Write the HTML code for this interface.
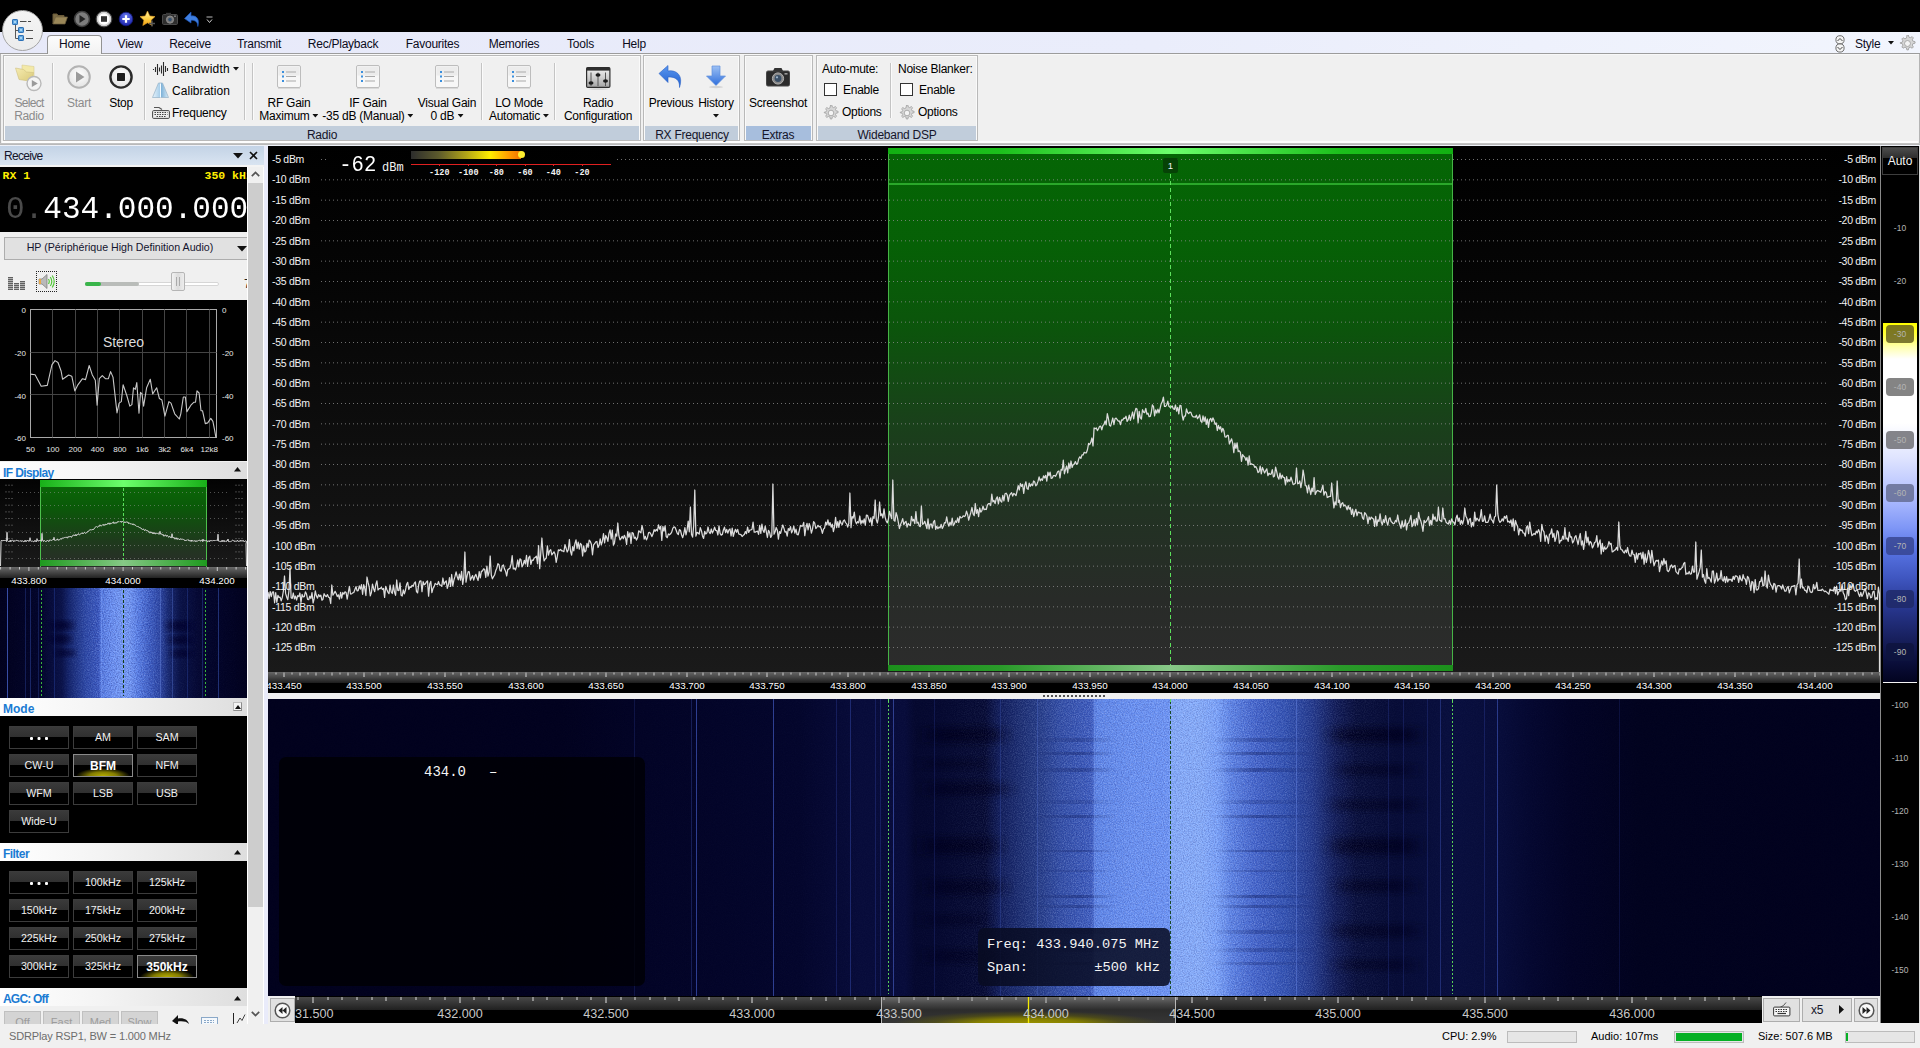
<!DOCTYPE html><html><head><meta charset="utf-8"><title>SDR Console</title><style>
*{box-sizing:border-box;margin:0;padding:0}
html,body{width:1920px;height:1048px;overflow:hidden;background:#000;}
body{position:relative;font-family:"Liberation Sans",sans-serif;font-size:12px;color:#000;}
.a{position:absolute;}
.t{position:absolute;white-space:nowrap;line-height:1;}
.c{transform:translateX(-50%);}
.r{transform:translateX(-100%);}
.mono{font-family:"Liberation Mono",monospace;}
.rb{font-size:12px;color:#000;letter-spacing:-.250px;}
.btn{position:absolute;width:60px;height:23px;border:1px solid #3c3c3c;background:linear-gradient(#3a3a3a 0,#303030 10px,#000 10px,#000 100%);color:#f0f0f0;font-size:10.700px;text-align:center;line-height:20px;}
.btn.sel{border-color:#8a8a8a;font-weight:bold;color:#fff;font-size:12px;line-height:23px;}
.btn.sel:after{content:"";position:absolute;left:2px;right:2px;bottom:0;height:9px;background:radial-gradient(ellipse 27px 8px at 50% 100%,#b4ac00 0,#837c00 50%,rgba(60,58,0,0) 100%);z-index:0}
.btn span{position:relative;z-index:1}
.ph{position:absolute;left:0;width:247px;background:linear-gradient(90deg,#fff 0,#f4f4f4 40%,#dedede 100%);color:#1b7bd3;font-weight:bold;font-size:12px;}
.ph b{position:absolute;left:3px;top:4px;line-height:14px}
.sb{position:absolute;background:#e1e1e1;border:1px solid #adadad;}
</style></head><body>
<div class="a" style="left:0px;top:32px;width:1920px;height:22px;background:linear-gradient(90deg,#e7e9f9 0,#eaedfb 60%,#f2f5fd 100%);"></div>
<div class="a" style="left:0px;top:53px;width:1920px;height:93px;background:#f0f0f0;border-top:1px solid #9c9c9c;"></div>
<div class="a" style="left:0px;top:54px;width:1920px;height:1px;background:#f8f8f8;"></div>
<div class="a" style="left:0px;top:54px;width:1px;height:92px;background:#b4b4b4;"></div>
<div class="a" style="left:1919px;top:54px;width:1px;height:92px;background:#b4b4b4;"></div>
<div class="a" style="left:0px;top:143px;width:1920px;height:2px;background:linear-gradient(#c8c8c8,#b4b4b4);"></div>
<div class="a" style="left:0px;top:145px;width:1920px;height:1px;background:#eef1f8;"></div>
<div class="a" style="left:2px;top:141px;width:1916px;height:2px;background:#fdfdfd;"></div>
<div class="a" style="left:47px;top:35px;width:55px;height:19px;background:linear-gradient(#fcfcfc,#f2f2f2);border:1px solid #929292;border-bottom:none;border-radius:4px 4px 0 0;"></div>
<div class="a" style="left:48px;top:54px;width:53px;height:1px;background:#f4f4f4;"></div>
<div class="t c rb" style="left:74.5px;top:38px;color:#0c0c1c;">Home</div>
<div class="t c rb" style="left:130px;top:38px;color:#0c0c1c;">View</div>
<div class="t c rb" style="left:190px;top:38px;color:#0c0c1c;">Receive</div>
<div class="t c rb" style="left:259px;top:38px;color:#0c0c1c;">Transmit</div>
<div class="t c rb" style="left:343px;top:38px;color:#0c0c1c;">Rec/Playback</div>
<div class="t c rb" style="left:432.5px;top:38px;color:#0c0c1c;">Favourites</div>
<div class="t c rb" style="left:514px;top:38px;color:#0c0c1c;">Memories</div>
<div class="t c rb" style="left:580.5px;top:38px;color:#0c0c1c;">Tools</div>
<div class="t c rb" style="left:634px;top:38px;color:#0c0c1c;">Help</div>
<div class="a" style="left:2px;top:10px;width:41px;height:41px;border-radius:50%;background:linear-gradient(#f4f4f4,#ececec);border:1px solid #a4a4a4;"></div>
<svg class="a" style="left:10px;top:17px;" width="26" height="26" viewBox="0 0 26 26">
<g fill="#62a8e0" stroke="#2a6eb4" stroke-width="1"><rect x="2.500" y="2.500" width="5" height="5" rx=".6"/><rect x="8.500" y="10.500" width="5" height="5" rx=".6"/><rect x="8.500" y="18.500" width="5" height="5" rx=".6"/></g>
<g fill="#a8d4f4"><rect x="4" y="4" width="2" height="2"/><rect x="10" y="12" width="2" height="2"/><rect x="10" y="20" width="2" height="2"/></g>
<path d="M5.500 8V21.500H8M5.500 13.500H8" stroke="#585858" fill="none" stroke-width="1"/>
<path d="M10 4.500h6.500M18 4.500h3M16 13.500h7M16 21.500h7" stroke="#4a4a4a" stroke-width="1"/></svg>
<svg class="a" style="left:52px;top:12px;" width="16" height="13" viewBox="0 0 16 13"><path d="M1 12V2h4l1 1.5h6V5" fill="#7b6b45" stroke="#6a5a38"/><path d="M1 12l2.5-7h12L13 12z" fill="#9a8758" stroke="#6f6040" stroke-width=".7"/></svg>
<svg class="a" style="left:73px;top:10px;" width="18" height="18" viewBox="0 0 18 18"><circle cx="9" cy="9" r="7.5" fill="#7d7d7d" stroke="#3d3d3d" stroke-width="1.6"/><path d="M6.5 5l6 4-6 4z" fill="#222"/></svg>
<svg class="a" style="left:95px;top:10px;" width="18" height="18" viewBox="0 0 18 18"><circle cx="9" cy="9" r="6.6" fill="#fff" stroke="#d0d0d0" stroke-width="1.8"/><circle cx="9" cy="9" r="7.9" fill="none" stroke="#555" stroke-width=".8"/><rect x="6" y="6.2" width="6" height="5.6" fill="#333"/></svg>
<svg class="a" style="left:118px;top:11px;" width="16" height="16" viewBox="0 0 16 16"><defs><radialGradient id="gp" cx=".5" cy=".3" r=".7"><stop offset="0" stop-color="#6a7cf0"/><stop offset="1" stop-color="#1a22a8"/></radialGradient></defs><circle cx="8" cy="8" r="6.8" fill="url(#gp)" stroke="#141a80" stroke-width=".8"/><path d="M8 4.3v7.4M4.3 8h7.4" stroke="#fff" stroke-width="2.2"/></svg>
<svg class="a" style="left:139px;top:10px;" width="19" height="18" viewBox="0 0 19 18"><defs><linearGradient id="gs" x1="0" y1="0" x2="0" y2="1"><stop offset="0" stop-color="#fff6b0"/><stop offset=".5" stop-color="#ffd24a"/><stop offset="1" stop-color="#f0a010"/></linearGradient></defs><path d="M8.5 1l2.3 5 5.2.6-3.9 3.6 1.1 5.3-4.7-2.7-4.7 2.7 1.1-5.3L1 6.6l5.2-.6z" fill="url(#gs)" stroke="#e8a020" stroke-width=".6"/><path d="M13 10.5v6M10 13.5h6" stroke="#555" stroke-width="1.4"/></svg>
<svg class="a" style="left:162px;top:12px;" width="16" height="13" viewBox="0 0 16 13"><rect x=".5" y="2.5" width="15" height="10" rx="1.2" fill="#2e2e2e" stroke="#4a4a4a"/><rect x="4" y=".8" width="5" height="2.4" fill="#3a3a3a"/><circle cx="8" cy="7.6" r="3.6" fill="#777" stroke="#999" stroke-width=".8"/><circle cx="8" cy="7.6" r="1.8" fill="#35506e"/><rect x="12" y="3.6" width="2" height="1.2" fill="#888"/></svg>
<svg class="a" style="left:183px;top:10px;" width="18" height="17" viewBox="0 0 18 17"><path d="M1.5 8.5L8 2v4c5.5-1 9 3.500 6.800 10.500 0-4.500-2.500-6.500-6.800-6.200V13z" fill="#3f7fe0" stroke="#1d55b8" stroke-width=".7"/></svg>
<svg class="a" style="left:206px;top:16px;" width="8" height="8" viewBox="0 0 8 8"><path d="M.5 1h6" stroke="#bbb"/><path d="M1 3.500l2.500 3 2.500-3" stroke="#ccc" fill="none"/></svg>
<svg class="a" style="left:1833px;top:35px;" width="14" height="18" viewBox="0 0 14 18"><circle cx="7" cy="4.800" r="4.100" fill="#f4f4f4" stroke="#6e6e6e" stroke-width="1"/><circle cx="7" cy="13" r="4.100" fill="#f4f4f4" stroke="#6e6e6e" stroke-width="1"/><path d="M4.500 6l2.500-2.500 2.500 2.500M4.500 12l2.500 2.500 2.500-2.500" stroke="#444" fill="none" stroke-width="1"/></svg>
<div class="t rb" style="left:1855px;top:38px;color:#0c0c1c;">Style</div>
<svg class="a" style="left:1888px;top:41px;" width="6" height="4" viewBox="0 0 6 4"><path d="M0 0h6l-3 3.500z" fill="#111"/></svg>
<svg class="a" style="left:1899px;top:35px;" width="17" height="17" viewBox="0 0 16 16"><path d="M7.500 0l1.300 0 .5 2 1.300.6 1.800-1 1.100 1.100-1 1.800.6 1.300 2 .5v1.400l-2 .5-.6 1.300 1 1.800-1.100 1.100-1.800-1-1.300.6-.5 2h-1.400l-.5-2-1.300-.6-1.800 1-1.100-1.100 1-1.800-.6-1.300-2-.5V7.300l2-.5.6-1.300-1-1.800 1.100-1.100 1.800 1 1.300-.6.5-2z" fill="#d6d6d6" stroke="#a6a6a6" stroke-width=".9"/><circle cx="8" cy="8" r="2.800" fill="#f4f4f4" stroke="#a6a6a6" stroke-width=".9"/></svg>
<div class="a" style="left:3px;top:55px;width:638px;height:86px;border:1px solid #b9b9b9;background:#f0f0f0;"></div>
<div class="a" style="left:4px;top:56px;width:636px;height:84px;border:1px solid #fafafa;border-bottom:none;"></div>
<div class="a" style="left:5px;top:126px;width:634px;height:14px;background:#c1cddb;"></div>
<div class="t c rb" style="left:322px;top:129px;color:#15152a;">Radio</div>
<div class="a" style="left:643px;top:55px;width:97px;height:86px;border:1px solid #b9b9b9;background:#f0f0f0;"></div>
<div class="a" style="left:644px;top:56px;width:95px;height:84px;border:1px solid #fafafa;border-bottom:none;"></div>
<div class="a" style="left:645px;top:126px;width:93px;height:14px;background:#c1cddb;"></div>
<div class="t c rb" style="left:692px;top:129px;color:#15152a;">RX Frequency</div>
<div class="a" style="left:744px;top:55px;width:69px;height:86px;border:1px solid #b9b9b9;background:#f0f0f0;"></div>
<div class="a" style="left:745px;top:56px;width:67px;height:84px;border:1px solid #fafafa;border-bottom:none;"></div>
<div class="a" style="left:746px;top:126px;width:65px;height:14px;background:#a7bedd;"></div>
<div class="t c rb" style="left:778px;top:129px;color:#15152a;">Extras</div>
<div class="a" style="left:816px;top:55px;width:162px;height:86px;border:1px solid #b9b9b9;background:#f0f0f0;"></div>
<div class="a" style="left:817px;top:56px;width:160px;height:84px;border:1px solid #fafafa;border-bottom:none;"></div>
<div class="a" style="left:818px;top:126px;width:158px;height:14px;background:#c1cddb;"></div>
<div class="t c rb" style="left:897px;top:129px;color:#15152a;">Wideband DSP</div>
<div class="a" style="left:52px;top:63px;width:1px;height:57px;background:#c4c4c4;"></div>
<div class="a" style="left:53px;top:63px;width:1px;height:57px;background:#fbfbfb;"></div>
<div class="a" style="left:144px;top:63px;width:1px;height:57px;background:#c4c4c4;"></div>
<div class="a" style="left:145px;top:63px;width:1px;height:57px;background:#fbfbfb;"></div>
<div class="a" style="left:244px;top:63px;width:1px;height:57px;background:#c4c4c4;"></div>
<div class="a" style="left:245px;top:63px;width:1px;height:57px;background:#fbfbfb;"></div>
<div class="a" style="left:252px;top:63px;width:1px;height:57px;background:#c4c4c4;"></div>
<div class="a" style="left:253px;top:63px;width:1px;height:57px;background:#fbfbfb;"></div>
<div class="a" style="left:481px;top:63px;width:1px;height:57px;background:#c4c4c4;"></div>
<div class="a" style="left:482px;top:63px;width:1px;height:57px;background:#fbfbfb;"></div>
<div class="a" style="left:554px;top:63px;width:1px;height:57px;background:#c4c4c4;"></div>
<div class="a" style="left:555px;top:63px;width:1px;height:57px;background:#fbfbfb;"></div>
<div class="a" style="left:890px;top:63px;width:1px;height:55px;background:#c4c4c4;"></div>
<div class="a" style="left:891px;top:63px;width:1px;height:55px;background:#fbfbfb;"></div>
<svg class="a" style="left:14px;top:62px;" width="30" height="30" viewBox="0 0 30 30"><defs><linearGradient id="gf" x1="0" y1="0" x2="1" y2="1"><stop offset="0" stop-color="#f6ecb0"/><stop offset="1" stop-color="#d9c878"/></linearGradient></defs>
<path d="M8 3l12 1.500v13H8z" fill="#f3e9a8" stroke="#d8cc90" stroke-width=".6"/>
<path d="M1.500 6l8 1.500 3 2.500 7 .5-1.500 9-13-2z" fill="url(#gf)" stroke="#cfc080" stroke-width=".6"/>
<circle cx="20" cy="21.500" r="7" fill="#f4f4f4" stroke="#b9b9b9" stroke-width="1.400"/><path d="M17.800 18l6 3.500-6 3.500z" fill="#9a9a9a"/></svg>
<div class="t c rb" style="left:29px;top:97px;color:#8b8b8b;letter-spacing:-.700px;">Select</div>
<div class="t c rb" style="left:29px;top:110px;color:#8b8b8b;letter-spacing:-.400px;">Radio</div>
<svg class="a" style="left:66px;top:64px;" width="26" height="26" viewBox="0 0 26 26"><defs><radialGradient id="gst" cx=".5" cy=".4" r=".6"><stop offset="0" stop-color="#ffffff"/><stop offset="1" stop-color="#e3e3e3"/></radialGradient></defs><circle cx="13" cy="13" r="10.800" fill="url(#gst)" stroke="#b3b3b3" stroke-width="2"/><path d="M10 7.500l8.500 5.500-8.500 5.500z" fill="#9b9b9b"/></svg>
<div class="t c rb" style="left:79px;top:97px;color:#8b8b8b;">Start</div>
<svg class="a" style="left:108px;top:64px;" width="26" height="26" viewBox="0 0 26 26"><circle cx="13" cy="13" r="10.600" fill="url(#gst)" stroke="#2a2a2a" stroke-width="2.400"/><rect x="9" y="9" width="8" height="8" rx=".8" fill="#1d1d1d"/></svg>
<div class="t c rb" style="left:121px;top:97px;">Stop</div>
<svg class="a" style="left:152px;top:61px;" width="18" height="16" viewBox="0 0 18 16"><path d="M1.500 8v1M3.500 6v5M5.500 3v11M7.500 6.500v4M9.500 4.500v8M11.500 1v14M13.500 5v6M15.500 7v3" stroke="#2c2c2c" stroke-width="1.100"/></svg>
<div class="t rb" style="left:172px;top:63px;letter-spacing:.200px;">Bandwidth</div>
<svg class="a" style="left:233px;top:67px;" width="6" height="4" viewBox="0 0 6 4"><path d="M0 0h6l-3 3.500z" fill="#111"/></svg>
<svg class="a" style="left:152px;top:82px;" width="18" height="17" viewBox="0 0 18 17"><defs><linearGradient id="gc" x1="0" y1="0" x2="1" y2="0"><stop offset="0" stop-color="#e8f4fc"/><stop offset=".45" stop-color="#a9cfea"/><stop offset=".55" stop-color="#7fb2d8"/><stop offset="1" stop-color="#d8ecf8"/></linearGradient></defs><path d="M6.500 1h4l6 14.500h-16z" fill="url(#gc)" stroke="#9db8cc" stroke-width=".8"/><path d="M8.500 1.500v14" stroke="#f4fbff" stroke-width="1"/></svg>
<div class="t rb" style="left:172px;top:85px;letter-spacing:.050px;">Calibration</div>
<svg class="a" style="left:152px;top:106px;" width="18" height="13" viewBox="0 0 18 13"><path d="M2 1.500h5l3 2" stroke="#555" fill="none" stroke-width="1.200"/><rect x=".6" y="4.600" width="16.800" height="7.800" rx="1" fill="#eee" stroke="#444" stroke-width="1"/><path d="M2.500 6.500h13M2.500 8.500h13M4.500 10.500h9" stroke="#444" stroke-width="1" stroke-dasharray="1.500 1"/></svg>
<div class="t rb" style="left:172px;top:107px;">Frequency</div>
<svg class="a" style="left:277px;top:65px;" width="24" height="24" viewBox="0 0 24 24"><rect x=".5" y=".5" width="23" height="22" rx="1.500" fill="#f7f7f7" stroke="#bdbdbd"/><rect x="1.500" y="1.500" width="21" height="9" fill="#ececec"/>
<path d="M9 7h10M9 11.500h10M9 16h10" stroke="#a9a9a9" stroke-width="1.200"/><g fill="#3a8fdd"><rect x="5" y="6" width="2" height="2"/><rect x="5" y="10.500" width="2" height="2"/><rect x="5" y="15" width="2" height="2"/></g><path d="M1 23.500h22" stroke="#d9d9d9"/></svg>
<div class="t c rb" style="left:289px;top:97px;">RF Gain</div>
<div class="t c rb" style="left:289px;top:110px;">Maximum <svg width="6" height="4" viewBox="0 0 6 4" style="vertical-align:2px"><path d="M0 0h6l-3 3.500z" fill="#111"/></svg></div>
<svg class="a" style="left:356px;top:65px;" width="24" height="24" viewBox="0 0 24 24"><rect x=".5" y=".5" width="23" height="22" rx="1.500" fill="#f7f7f7" stroke="#bdbdbd"/><rect x="1.500" y="1.500" width="21" height="9" fill="#ececec"/>
<path d="M9 7h10M9 11.500h10M9 16h10" stroke="#a9a9a9" stroke-width="1.200"/><g fill="#3a8fdd"><rect x="5" y="6" width="2" height="2"/><rect x="5" y="10.500" width="2" height="2"/><rect x="5" y="15" width="2" height="2"/></g><path d="M1 23.500h22" stroke="#d9d9d9"/></svg>
<div class="t c rb" style="left:368px;top:97px;">IF Gain</div>
<div class="t c rb" style="left:368px;top:110px;">-35 dB (Manual) <svg width="6" height="4" viewBox="0 0 6 4" style="vertical-align:2px"><path d="M0 0h6l-3 3.500z" fill="#111"/></svg></div>
<svg class="a" style="left:435px;top:65px;" width="24" height="24" viewBox="0 0 24 24"><rect x=".5" y=".5" width="23" height="22" rx="1.500" fill="#f7f7f7" stroke="#bdbdbd"/><rect x="1.500" y="1.500" width="21" height="9" fill="#ececec"/>
<path d="M9 7h10M9 11.500h10M9 16h10" stroke="#a9a9a9" stroke-width="1.200"/><g fill="#3a8fdd"><rect x="5" y="6" width="2" height="2"/><rect x="5" y="10.500" width="2" height="2"/><rect x="5" y="15" width="2" height="2"/></g><path d="M1 23.500h22" stroke="#d9d9d9"/></svg>
<div class="t c rb" style="left:447px;top:97px;">Visual Gain</div>
<div class="t c rb" style="left:447px;top:110px;">0 dB <svg width="6" height="4" viewBox="0 0 6 4" style="vertical-align:2px"><path d="M0 0h6l-3 3.500z" fill="#111"/></svg></div>
<svg class="a" style="left:507px;top:65px;" width="24" height="24" viewBox="0 0 24 24"><rect x=".5" y=".5" width="23" height="22" rx="1.500" fill="#f7f7f7" stroke="#bdbdbd"/><rect x="1.500" y="1.500" width="21" height="9" fill="#ececec"/>
<path d="M9 7h10M9 11.500h10M9 16h10" stroke="#a9a9a9" stroke-width="1.200"/><g fill="#3a8fdd"><rect x="5" y="6" width="2" height="2"/><rect x="5" y="10.500" width="2" height="2"/><rect x="5" y="15" width="2" height="2"/></g><path d="M1 23.500h22" stroke="#d9d9d9"/></svg>
<div class="t c rb" style="left:519px;top:97px;">LO Mode</div>
<div class="t c rb" style="left:519px;top:110px;">Automatic <svg width="6" height="4" viewBox="0 0 6 4" style="vertical-align:2px"><path d="M0 0h6l-3 3.500z" fill="#111"/></svg></div>
<svg class="a" style="left:586px;top:67px;" width="25" height="23" viewBox="0 0 25 23"><defs><linearGradient id="grc" x1="0" y1="0" x2="0" y2="1"><stop offset="0" stop-color="#f2f2f2"/><stop offset=".5" stop-color="#cfcfcf"/><stop offset="1" stop-color="#a4a4a4"/></linearGradient></defs>
<rect x=".6" y=".6" width="23.300" height="19.800" rx="1.200" fill="url(#grc)" stroke="#2e2e2e" stroke-width="1.200"/><rect x=".6" y=".6" width="23.300" height="3" fill="#2e2e2e"/>
<path d="M5 5.500v13.500M12 5.500v13.500M19.500 5.500v13.500" stroke="#555" stroke-width="1"/>
<ellipse cx="5" cy="16" rx="2.500" ry="1.700" fill="#1c1c1c"/><ellipse cx="12" cy="8" rx="2.500" ry="1.700" fill="#1c1c1c"/><ellipse cx="19.500" cy="14" rx="2.500" ry="1.700" fill="#1c1c1c"/>
<ellipse cx="12.500" cy="22" rx="10" ry=".8" fill="#d2d2d2"/></svg>
<div class="t c rb" style="left:598px;top:97px;">Radio</div>
<div class="t c rb" style="left:598px;top:110px;">Configuration</div>
<svg class="a" style="left:657px;top:64px;" width="28" height="26" viewBox="0 0 28 26"><defs><linearGradient id="gu" x1="0" y1="0" x2="0" y2="1"><stop offset="0" stop-color="#5b97ee"/><stop offset="1" stop-color="#1f5fd0"/></linearGradient></defs><path d="M2 9.500L11 1.500v5.500c9-1.500 15.500 5 11.500 16.500.5-7.500-4-11-11.500-10.500V18.500z" fill="url(#gu)" stroke="#2a62c6" stroke-width=".6"/></svg>
<div class="t c rb" style="left:671px;top:97px;">Previous</div>
<svg class="a" style="left:705px;top:65px;" width="22" height="24" viewBox="0 0 22 24"><defs><linearGradient id="gh" x1="0" y1="0" x2="0" y2="1"><stop offset="0" stop-color="#9cc0f4"/><stop offset="1" stop-color="#2f6fdc"/></linearGradient></defs><path d="M7 1h8v10h5.500L11 20.500 1.500 11H7z" fill="url(#gh)" stroke="#5e8fdc" stroke-width=".7"/><ellipse cx="11" cy="22" rx="7" ry="1.200" fill="#d4d4d4"/></svg>
<div class="t c rb" style="left:716px;top:97px;">History</div>
<svg class="a" style="left:713px;top:114px;" width="6" height="4" viewBox="0 0 6 4"><path d="M0 0h6l-3 3.500z" fill="#111"/></svg>
<svg class="a" style="left:766px;top:67px;" width="24" height="20" viewBox="0 0 24 20"><rect x=".5" y="4" width="23" height="15" rx="1.500" fill="#2b2b2b" stroke="#474747"/><path d="M7 4l1.500-3h7L17 4z" fill="#333"/><circle cx="12" cy="11.500" r="5.600" fill="#888" stroke="#b0b0b0" stroke-width="1"/><circle cx="12" cy="11.500" r="3.400" fill="#3a4f66"/><circle cx="11" cy="10.300" r="1.100" fill="#9fb6cc"/><rect x="18.500" y="6" width="3" height="1.600" fill="#999"/></svg>
<div class="t c rb" style="left:778px;top:97px;">Screenshot</div>
<div class="t rb" style="left:822px;top:63px;">Auto-mute:</div>
<div class="a" style="left:824px;top:83px;width:13px;height:13px;background:#fff;border:1px solid #333;"></div>
<div class="t rb" style="left:843px;top:84px;">Enable</div>
<svg class="a" style="left:823px;top:105px;" width="16" height="16" viewBox="0 0 16 16"><path d="M7.500 0l1.300 0 .5 2 1.300.6 1.800-1 1.100 1.100-1 1.800.6 1.300 2 .5v1.400l-2 .5-.6 1.300 1 1.800-1.100 1.100-1.800-1-1.300.6-.5 2h-1.400l-.5-2-1.300-.6-1.800 1-1.100-1.100 1-1.800-.6-1.300-2-.5V7.300l2-.5.6-1.300-1-1.800 1.100-1.100 1.800 1 1.300-.6.5-2z" fill="#d6d6d6" stroke="#a6a6a6" stroke-width=".9"/><circle cx="8" cy="8" r="2.800" fill="#f4f4f4" stroke="#a6a6a6" stroke-width=".9"/></svg>
<div class="t rb" style="left:842px;top:106px;">Options</div>
<div class="t rb" style="left:898px;top:63px;">Noise Blanker:</div>
<div class="a" style="left:900px;top:83px;width:13px;height:13px;background:#fff;border:1px solid #333;"></div>
<div class="t rb" style="left:919px;top:84px;">Enable</div>
<svg class="a" style="left:899px;top:105px;" width="16" height="16" viewBox="0 0 16 16"><path d="M7.500 0l1.300 0 .5 2 1.300.6 1.800-1 1.100 1.100-1 1.800.6 1.300 2 .5v1.400l-2 .5-.6 1.300 1 1.800-1.100 1.100-1.800-1-1.300.6-.5 2h-1.400l-.5-2-1.300-.6-1.800 1-1.100-1.100 1-1.800-.6-1.300-2-.5V7.300l2-.5.6-1.300-1-1.800 1.100-1.100 1.800 1 1.300-.6.5-2z" fill="#d6d6d6" stroke="#a6a6a6" stroke-width=".9"/><circle cx="8" cy="8" r="2.800" fill="#f4f4f4" stroke="#a6a6a6" stroke-width=".9"/></svg>
<div class="t rb" style="left:918px;top:106px;">Options</div>
<div class="a" style="left:0px;top:146px;width:268px;height:878px;background:#f0f0f0;"></div>
<div class="a" style="left:0px;top:146px;width:264px;height:19px;background:linear-gradient(#c3d3e6,#d9e4f1);"></div>
<div class="t rb" style="left:4px;top:150px;color:#15152a;letter-spacing:-.700px;">Receive</div>
<svg class="a" style="left:233px;top:153px;" width="10" height="6" viewBox="0 0 10 6"><path d="M0 0h10l-5 5.500z" fill="#111"/></svg>
<svg class="a" style="left:249px;top:151px;" width="9" height="9" viewBox="0 0 9 9"><path d="M1 1l7 7M8 1l-7 7" stroke="#111" stroke-width="1.600"/></svg>
<div class="a" style="left:0px;top:165px;width:264px;height:2px;background:#f4f4f4;"></div>
<div class="a" style="left:264px;top:146px;width:4px;height:878px;background:#e9ebfa;"></div>
<div class="a" style="left:247px;top:167px;width:1px;height:857px;background:#fff;"></div>
<div class="a" style="left:248px;top:167px;width:15px;height:857px;background:#f0f0f0;"></div>
<div class="a" style="left:248px;top:183px;width:15px;height:724px;background:#cdcdcd;"></div>
<svg class="a" style="left:251px;top:171px;" width="9" height="6" viewBox="0 0 9 6"><path d="M.8 5.200l3.700-3.700 3.700 3.700" stroke="#555" stroke-width="1.700" fill="none"/></svg>
<svg class="a" style="left:251px;top:1011px;" width="9" height="6" viewBox="0 0 9 6"><path d="M.8 .8l3.700 3.700 3.700-3.700" stroke="#555" stroke-width="1.700" fill="none"/></svg>
<div class="a" style="left:263px;top:167px;width:1px;height:857px;background:#fff;"></div>
<div class="a" style="left:0px;top:167px;width:247px;height:65px;background:#000;overflow:hidden;"><div class="t mono" style="left:2.500px;top:2.500px;font-size:11.500px;font-weight:bold;color:#ffee00;">RX 1</div><div class="t mono" style="left:204.500px;top:2.500px;font-size:11.500px;font-weight:bold;color:#ffee00;">350 kHz</div><div class="t mono" id="bigf" style="left:6px;top:26.500px;font-size:31.050px;color:#fff;transform-origin:0 50%;transform:scaleY(1.030);"><span style="color:#4a4a4a">0.</span>434.000.000</div></div>
<div class="a" style="left:4px;top:237px;width:250px;height:23px;background:#e1e1e1;border:1px solid #adadad;"></div>
<div class="a" style="left:247px;top:237px;width:8px;height:23px;background:#fff;"></div>
<div class="a" style="left:248px;top:237px;width:15px;height:23px;background:#cdcdcd;"></div>
<div class="t " style="left:119.5px;top:242px;font-size:11.500px;color:#14142e;transform:translateX(-50%) scaleX(.925);">HP (P&eacute;riph&eacute;rique High Definition Audio)</div>
<svg class="a" style="left:237px;top:246px;" width="10" height="6" viewBox="0 0 10 6"><path d="M0 0h10l-5 5.500z" fill="#111"/></svg>
<svg class="a" style="left:8px;top:276px;" width="17" height="14" viewBox="0 0 17 14"><g stroke="#606060" stroke-width="1" shape-rendering="crispEdges"><path d="M0 1.500h5M0 3.500h5M0 5.500h5M0 7.500h5M0 9.500h5M0 11.500h5M0 13.500h5"/><path d="M6 7.500h5M6 9.500h5M6 11.500h5M6 13.500h5"/><path d="M12 5.500h5M12 7.500h5M12 9.500h5M12 11.500h5M12 13.500h5"/></g><g stroke="#b0b0b0" stroke-width="1" shape-rendering="crispEdges"><path d="M0 2.500h5M0 4.500h5M0 6.500h5M0 8.500h5M0 10.500h5M0 12.500h5M6 8.500h5M6 10.500h5M6 12.500h5M12 6.500h5M12 8.500h5M12 10.500h5M12 12.500h5"/></g></svg>
<div class="a" style="left:36px;top:271px;width:21px;height:21px;border:1px dotted #222;"></div>
<svg class="a" style="left:38px;top:274px;" width="17" height="15" viewBox="0 0 17 15"><path d="M1 5h3l5-4.500v14L4 10H1z" fill="#b9b9b9" stroke="#777" stroke-width=".7"/><path d="M1 5h2v5H1z" fill="#e8a848"/><path d="M10.500 5q1.500 2.500 0 5M12.300 3q3 4.500 0 9M14.200 1.500q4 6 0 12" stroke="#55c83c" fill="none" stroke-width="1.200"/></svg>
<div class="a" style="left:85px;top:282px;width:134px;height:4px;background:#fff;border:1px solid #d6d6d6;border-radius:2px;"></div>
<div class="a" style="left:85px;top:282px;width:54px;height:4px;background:#b9bcb9;border-radius:2px;"></div>
<div class="a" style="left:85px;top:282px;width:16px;height:4px;background:#39b54a;border-radius:2px;"></div>
<div class="a" style="left:171px;top:272px;width:14px;height:19px;background:linear-gradient(90deg,#f2f2f2,#dcdcdc 50%,#ededed);border:1px solid #b5b5b5;border-radius:2px;"></div>
<div class="a" style="left:176px;top:277px;width:1px;height:9px;background:#aaa;"></div>
<div class="a" style="left:179px;top:277px;width:1px;height:9px;background:#aaa;"></div>
<div class="a" style="left:240px;top:274px;width:7px;height:16px;overflow:hidden;"><div class="t rb" style="left:4px;top:4px;color:#222">7</div></div>
<div class="a" style="left:0px;top:300px;width:247px;height:161px;background:#000;"></div>
<svg class="a" style="left:0;top:300px" width="247" height="161" viewBox="0 300 247 161"><rect x="30.5" y="309.5" width="186.0" height="128.0" fill="none" stroke="#a8a8a8" stroke-width="1"/><path d="M52.5 309.5V437.5" stroke="#444" stroke-width="1"/><path d="M75.5 309.5V437.5" stroke="#444" stroke-width="1"/><path d="M97.5 309.5V437.5" stroke="#444" stroke-width="1"/><path d="M119.5 309.5V437.5" stroke="#444" stroke-width="1"/><path d="M142.5 309.5V437.5" stroke="#444" stroke-width="1"/><path d="M164.5 309.5V437.5" stroke="#444" stroke-width="1"/><path d="M186.5 309.5V437.5" stroke="#444" stroke-width="1"/><path d="M209.5 309.5V437.5" stroke="#444" stroke-width="1"/><path d="M30.5 352.5H216.5" stroke="#444" stroke-width="1"/><path d="M30.5 394.5H216.5" stroke="#444" stroke-width="1"/><path d="M30.5 374.1 L35.1 374.7 L41.2 386.3 L47.3 385.4 L51.9 364.9 L55.0 360.6 L58.0 362.5 L61.1 371.0 L62.6 379.3 L68.7 375.0 L71.8 376.2 L74.8 390.9 L77.9 384.8 L82.5 378.7 L85.5 379.6 L89.2 365.5 L92.2 374.7 L95.3 380.2 L97.1 405.2 L99.3 378.7 L102.3 375.6 L105.4 378.7 L108.4 378.7 L110.6 371.6 L113.0 377.1 L117.0 412.9 L119.1 403.1 L121.3 401.6 L123.1 384.8 L126.8 395.5 L129.8 406.1 L131.9 404.6 L133.5 387.8 L135.3 389.3 L136.8 382.6 L139.0 413.2 L140.5 392.4 L142.0 393.9 L143.6 406.1 L146.6 387.8 L150.3 379.3 L152.7 393.9 L156.7 387.8 L159.4 398.5 L161.9 400.0 L164.9 416.2 L168.9 401.6 L171.0 403.1 L174.7 413.8 L179.3 419.0 L180.8 413.8 L183.3 397.0 L185.4 397.0 L186.9 411.6 L190.9 405.2 L194.0 402.2 L195.5 402.2 L197.0 390.9 L199.1 393.0 L201.0 410.7 L202.5 410.7 L205.3 423.6 L207.7 422.9 L210.8 418.4 L212.9 421.4 L214.7 430.6 L215.9 437.6" fill="none" stroke="#c8c8c8" stroke-width="1.100" stroke-linejoin="round"/></svg>
<div class="t r" style="left:26px;top:307px;font-size:8px;color:#e8e8e8;">0</div>
<div class="t " style="left:222px;top:307px;font-size:8px;color:#e8e8e8;">0</div>
<div class="t r" style="left:26px;top:349.5px;font-size:8px;color:#e8e8e8;">-20</div>
<div class="t " style="left:222px;top:349.5px;font-size:8px;color:#e8e8e8;">-20</div>
<div class="t r" style="left:26px;top:392.5px;font-size:8px;color:#e8e8e8;">-40</div>
<div class="t " style="left:222px;top:392.5px;font-size:8px;color:#e8e8e8;">-40</div>
<div class="t r" style="left:26px;top:434.5px;font-size:8px;color:#e8e8e8;">-60</div>
<div class="t " style="left:222px;top:434.5px;font-size:8px;color:#e8e8e8;">-60</div>
<div class="t c" style="left:30.5px;top:446px;font-size:8px;color:#e8e8e8;">50</div>
<div class="t c" style="left:52.85px;top:446px;font-size:8px;color:#e8e8e8;">100</div>
<div class="t c" style="left:75.2px;top:446px;font-size:8px;color:#e8e8e8;">200</div>
<div class="t c" style="left:97.55000000000001px;top:446px;font-size:8px;color:#e8e8e8;">400</div>
<div class="t c" style="left:119.9px;top:446px;font-size:8px;color:#e8e8e8;">800</div>
<div class="t c" style="left:142.25px;top:446px;font-size:8px;color:#e8e8e8;">1k6</div>
<div class="t c" style="left:164.60000000000002px;top:446px;font-size:8px;color:#e8e8e8;">3k2</div>
<div class="t c" style="left:186.95000000000002px;top:446px;font-size:8px;color:#e8e8e8;">6k4</div>
<div class="t c" style="left:209.3px;top:446px;font-size:8px;color:#e8e8e8;">12k8</div>
<div class="t c" style="left:123.5px;top:335px;font-size:14px;color:#dcdcdc;">Stereo</div>
<div class="ph" style="top:462px;height:17px;"><b style="letter-spacing:-.600px">IF Display</b></div>
<svg class="a" style="left:234px;top:467px;" width="7" height="5" viewBox="0 0 7 5"><path d="M0 4.500h7L3.500 0z" fill="#111"/></svg>
<div class="a" style="left:0px;top:479px;width:247px;height:88px;background:linear-gradient(#030303,#1a1a1a);"></div>
<div class="a" style="left:40px;top:480px;width:167px;height:87px;background:linear-gradient(#0b6a08 0,#0a5a08 30%,#1e3a1c 70%,#2a2c2a 100%);border-left:1px solid #4cc04c;border-right:1px solid #4cc04c;"></div>
<div class="a" style="left:40px;top:480px;width:167px;height:7px;background:linear-gradient(90deg,#18b018,#6cff6c 50%,#18b018);"></div>
<div class="a" style="left:40px;top:560px;width:167px;height:6px;background:linear-gradient(90deg,#1e9a1e,#86c886 50%,#1e9a1e);"></div>
<svg class="a" style="left:0;top:479px" width="247" height="110" viewBox="0 479 247 110"><path d="M18 492.5H228" stroke="#9a9a9a" stroke-width="1" stroke-dasharray="1 3" opacity=".5"/><path d="M18 505.5H228" stroke="#9a9a9a" stroke-width="1" stroke-dasharray="1 3" opacity=".5"/><path d="M18 518.5H228" stroke="#9a9a9a" stroke-width="1" stroke-dasharray="1 3" opacity=".5"/><path d="M18 532.5H228" stroke="#9a9a9a" stroke-width="1" stroke-dasharray="1 3" opacity=".5"/><path d="M18 545.5H228" stroke="#9a9a9a" stroke-width="1" stroke-dasharray="1 3" opacity=".5"/><path d="M18 558.5H228" stroke="#9a9a9a" stroke-width="1" stroke-dasharray="1 3" opacity=".5"/><path d="M5 485.2h8M235 485.2h8" stroke="#8a8a8a" stroke-width="1" opacity=".45" stroke-dasharray="2 1"/><path d="M5 491.9h8M235 491.9h8" stroke="#8a8a8a" stroke-width="1" opacity=".45" stroke-dasharray="2 1"/><path d="M5 498.5h8M235 498.5h8" stroke="#8a8a8a" stroke-width="1" opacity=".45" stroke-dasharray="2 1"/><path d="M5 505.2h8M235 505.2h8" stroke="#8a8a8a" stroke-width="1" opacity=".45" stroke-dasharray="2 1"/><path d="M5 511.9h8M235 511.9h8" stroke="#8a8a8a" stroke-width="1" opacity=".45" stroke-dasharray="2 1"/><path d="M5 518.5h8M235 518.5h8" stroke="#8a8a8a" stroke-width="1" opacity=".45" stroke-dasharray="2 1"/><path d="M5 525.2h8M235 525.2h8" stroke="#8a8a8a" stroke-width="1" opacity=".45" stroke-dasharray="2 1"/><path d="M5 531.9h8M235 531.9h8" stroke="#8a8a8a" stroke-width="1" opacity=".45" stroke-dasharray="2 1"/><path d="M5 538.6h8M235 538.6h8" stroke="#8a8a8a" stroke-width="1" opacity=".45" stroke-dasharray="2 1"/><path d="M5 545.2h8M235 545.2h8" stroke="#8a8a8a" stroke-width="1" opacity=".45" stroke-dasharray="2 1"/><path d="M5 551.9h8M235 551.9h8" stroke="#8a8a8a" stroke-width="1" opacity=".45" stroke-dasharray="2 1"/><path d="M5 558.6h8M235 558.6h8" stroke="#8a8a8a" stroke-width="1" opacity=".45" stroke-dasharray="2 1"/><path d="M123.500 488V560" stroke="#58e058" stroke-width="1" stroke-dasharray="3 2"/><path d="M0.500 566 L1 544 L1.0 541.3 L1.5 540.2 L2.0 541.1 L2.5 540.8 L3.0 540.2 L3.5 541.0 L4.0 540.2 L4.5 540.9 L5.0 540.2 L5.5 540.3 L6.0 540.9 L6.5 541.6 L7.0 532.3 L7.5 540.5 L8.0 541.2 L8.5 541.8 L9.0 541.1 L9.5 540.8 L10.0 541.9 L10.5 540.2 L11.0 541.6 L11.5 540.6 L12.0 540.4 L12.5 540.3 L13.0 540.7 L13.5 541.6 L14.0 540.4 L14.5 541.1 L15.0 541.3 L15.5 540.8 L16.0 541.1 L16.5 540.2 L17.0 540.2 L17.5 540.5 L18.0 541.3 L18.5 540.9 L19.0 540.7 L19.5 541.2 L20.0 540.9 L20.5 540.6 L21.0 541.5 L21.5 541.4 L22.0 540.5 L22.5 541.1 L23.0 541.0 L23.5 541.7 L24.0 541.4 L24.5 540.6 L25.0 541.9 L25.5 540.3 L26.0 540.9 L26.5 541.5 L27.0 540.4 L27.5 541.0 L28.0 540.2 L28.5 541.3 L29.0 541.5 L29.5 541.1 L30.0 537.7 L30.5 540.7 L31.0 541.4 L31.5 541.2 L32.0 541.1 L32.5 540.9 L33.0 541.6 L33.5 541.8 L34.0 541.0 L34.5 541.3 L35.0 540.2 L35.5 541.4 L36.0 541.3 L36.5 541.9 L37.0 538.6 L37.5 540.6 L38.0 540.8 L38.5 541.3 L39.0 540.1 L39.5 540.9 L40.0 540.4 L40.5 540.3 L41.0 540.2 L41.5 541.4 L42.0 533.3 L42.5 540.4 L43.0 540.7 L43.5 541.5 L44.0 540.1 L44.5 540.7 L45.0 540.9 L45.5 541.5 L46.0 541.3 L46.5 541.4 L47.0 540.3 L47.5 540.5 L48.0 540.4 L48.5 541.4 L49.0 541.5 L49.5 540.0 L50.0 540.0 L50.5 540.1 L51.0 540.0 L51.5 540.4 L52.0 540.5 L52.5 539.8 L53.0 539.3 L53.5 540.0 L54.0 537.3 L54.5 540.1 L55.0 540.7 L55.5 540.2 L56.0 539.8 L56.5 539.9 L57.0 540.0 L57.5 538.8 L58.0 540.3 L58.5 540.0 L59.0 540.1 L59.5 539.9 L60.0 539.1 L60.5 539.0 L61.0 538.4 L61.5 539.3 L62.0 538.2 L62.5 538.1 L63.0 538.2 L63.5 538.0 L64.0 538.2 L64.5 537.5 L65.0 537.3 L65.5 537.4 L66.0 537.2 L66.5 537.5 L67.0 536.8 L67.5 538.2 L68.0 537.6 L68.5 536.6 L69.0 536.6 L69.5 536.7 L70.0 536.6 L70.5 536.0 L71.0 537.2 L71.5 537.3 L72.0 536.2 L72.5 536.1 L73.0 535.2 L73.5 535.1 L74.0 535.4 L74.5 535.1 L75.0 536.0 L75.5 534.7 L76.0 534.3 L76.5 535.8 L77.0 534.9 L77.5 534.1 L78.0 534.6 L78.5 533.6 L79.0 534.3 L79.5 535.0 L80.0 534.6 L80.5 534.2 L81.0 533.3 L81.5 533.3 L82.0 532.8 L82.5 533.8 L83.0 533.2 L83.5 533.5 L84.0 532.5 L84.5 532.2 L85.0 533.1 L85.5 533.3 L86.0 532.9 L86.5 532.7 L87.0 532.6 L87.5 532.2 L88.0 531.0 L88.5 531.3 L89.0 530.7 L89.5 529.9 L90.0 529.6 L90.5 529.8 L91.0 529.5 L91.5 530.0 L92.0 530.2 L92.5 529.1 L93.0 529.7 L93.5 529.5 L94.0 529.2 L94.5 527.9 L95.0 527.4 L95.5 527.1 L96.0 526.8 L96.5 526.6 L97.0 527.1 L97.5 527.3 L98.0 526.9 L98.5 526.0 L99.0 526.1 L99.5 526.2 L100.0 524.8 L100.5 525.8 L101.0 526.1 L101.5 525.8 L102.0 525.6 L102.5 525.0 L103.0 524.4 L103.5 525.4 L104.0 524.4 L104.5 525.2 L105.0 525.4 L105.5 524.2 L106.0 524.1 L106.5 525.0 L107.0 524.5 L107.5 523.4 L108.0 523.2 L108.5 523.1 L109.0 524.4 L109.5 524.1 L110.0 522.8 L110.5 523.9 L111.0 524.1 L111.5 523.4 L112.0 522.7 L112.5 523.0 L113.0 522.2 L113.5 521.9 L114.0 523.6 L114.5 522.9 L115.0 522.6 L115.5 523.3 L116.0 522.3 L116.5 523.1 L117.0 522.9 L117.5 521.7 L118.0 521.7 L118.5 521.7 L119.0 521.6 L119.5 522.1 L120.0 521.5 L120.5 521.7 L121.0 521.1 L121.5 522.4 L122.0 521.4 L122.5 521.5 L123.0 521.7 L123.5 522.4 L124.0 521.6 L124.5 522.7 L125.0 522.1 L125.5 522.3 L126.0 522.4 L126.5 521.7 L127.0 522.6 L127.5 522.2 L128.0 522.1 L128.5 523.6 L129.0 522.7 L129.5 523.3 L130.0 523.9 L130.5 523.8 L131.0 523.5 L131.5 524.0 L132.0 524.2 L132.5 524.8 L133.0 523.7 L133.5 524.7 L134.0 524.3 L134.5 524.5 L135.0 525.5 L135.5 525.3 L136.0 525.6 L136.5 526.2 L137.0 526.7 L137.5 526.1 L138.0 526.7 L138.5 526.8 L139.0 527.0 L139.5 527.6 L140.0 527.4 L140.5 527.8 L141.0 528.0 L141.5 529.0 L142.0 528.9 L142.5 529.4 L143.0 529.8 L143.5 528.8 L144.0 529.6 L144.5 530.5 L145.0 530.6 L145.5 529.6 L146.0 529.8 L146.5 530.6 L147.0 530.2 L147.5 530.8 L148.0 530.7 L148.5 532.1 L149.0 532.5 L149.5 532.8 L150.0 531.6 L150.5 532.7 L151.0 532.7 L151.5 531.9 L152.0 533.3 L152.5 533.5 L153.0 532.3 L153.5 533.7 L154.0 532.8 L154.5 533.1 L155.0 534.1 L155.5 533.9 L156.0 532.8 L156.5 533.4 L157.0 533.6 L157.5 533.4 L158.0 533.3 L158.5 533.6 L159.0 534.4 L159.5 533.2 L160.0 531.3 L160.5 534.2 L161.0 533.5 L161.5 534.2 L162.0 534.9 L162.5 534.8 L163.0 534.2 L163.5 536.0 L164.0 535.7 L164.5 536.2 L165.0 534.8 L165.5 535.2 L166.0 535.0 L166.5 536.4 L167.0 535.6 L167.5 535.5 L168.0 536.2 L168.5 537.2 L169.0 537.2 L169.5 536.3 L170.0 536.3 L170.5 537.8 L171.0 537.3 L171.5 537.7 L172.0 533.7 L172.5 536.8 L173.0 538.1 L173.5 537.7 L174.0 537.2 L174.5 538.9 L175.0 538.5 L175.5 538.9 L176.0 537.7 L176.5 539.2 L177.0 537.9 L177.5 539.4 L178.0 538.8 L178.5 538.7 L179.0 539.2 L179.5 540.0 L180.0 538.9 L180.5 538.7 L181.0 539.6 L181.5 539.2 L182.0 539.0 L182.5 539.2 L183.0 539.1 L183.5 539.5 L184.0 539.8 L184.5 539.9 L185.0 540.9 L185.5 540.1 L186.0 540.6 L186.5 540.0 L187.0 540.3 L187.5 539.8 L188.0 540.2 L188.5 539.8 L189.0 541.1 L189.5 540.8 L190.0 540.1 L190.5 540.6 L191.0 541.5 L191.5 540.0 L192.0 541.3 L192.5 540.6 L193.0 540.7 L193.5 541.3 L194.0 540.5 L194.5 540.8 L195.0 541.1 L195.5 541.6 L196.0 540.5 L196.5 541.4 L197.0 541.2 L197.5 541.0 L198.0 540.6 L198.5 540.5 L199.0 540.0 L199.5 540.2 L200.0 540.1 L200.5 541.3 L201.0 540.4 L201.5 540.3 L202.0 540.1 L202.5 541.5 L203.0 539.1 L203.5 541.2 L204.0 540.5 L204.5 540.4 L205.0 540.5 L205.5 540.9 L206.0 540.3 L206.5 540.8 L207.0 540.5 L207.5 541.8 L208.0 541.8 L208.5 541.1 L209.0 540.5 L209.5 541.8 L210.0 540.7 L210.5 540.7 L211.0 540.1 L211.5 540.8 L212.0 541.0 L212.5 541.0 L213.0 540.5 L213.5 541.0 L214.0 540.1 L214.5 540.6 L215.0 540.3 L215.5 540.8 L216.0 540.2 L216.5 540.1 L217.0 540.6 L217.5 540.5 L218.0 534.2 L218.5 541.1 L219.0 541.5 L219.5 541.3 L220.0 541.4 L220.5 541.7 L221.0 540.8 L221.5 540.7 L222.0 541.9 L222.5 540.4 L223.0 541.4 L223.5 541.3 L224.0 540.2 L224.5 541.6 L225.0 541.7 L225.5 541.2 L226.0 541.4 L226.5 541.6 L227.0 540.4 L227.5 541.0 L228.0 539.0 L228.5 541.6 L229.0 541.5 L229.5 541.6 L230.0 541.2 L230.5 541.7 L231.0 541.3 L231.5 541.3 L232.0 540.5 L232.5 540.2 L233.0 540.3 L233.5 540.7 L234.0 540.3 L234.5 541.6 L235.0 541.1 L235.5 541.2 L236.0 541.2 L236.5 541.3 L237.0 541.0 L237.5 540.1 L238.0 541.5 L238.5 541.4 L239.0 541.0 L239.5 541.1 L240.0 541.3 L240.5 540.2 L241.0 541.4 L241.5 540.6 L242.0 540.2 L242.5 540.6 L243.0 541.4 L243.5 540.5 L244.0 541.4 L244.5 541.9 L245.0 541.0 L245.5 540.8 L246.0 541.0 L246.5 541.3 L246 544 L246.500 566" fill="none" stroke="#d6d6d6" stroke-width="1"/><defs><linearGradient id="gax" x1="0" y1="0" x2="0" y2="1"><stop offset="0" stop-color="#6a6a6a"/><stop offset="1" stop-color="#222"/></linearGradient></defs><rect x="0" y="567" width="247" height="11" fill="url(#gax)"/><rect x="0" y="578" width="247" height="11" fill="#000"/><path d="M0.6 567v2.5" stroke="#c8c8c8" stroke-width="1"/><path d="M10.1 567v2.5" stroke="#c8c8c8" stroke-width="1"/><path d="M19.5 567v2.5" stroke="#c8c8c8" stroke-width="1"/><path d="M28.9 567v4" stroke="#c8c8c8" stroke-width="1"/><path d="M38.3 567v2.5" stroke="#c8c8c8" stroke-width="1"/><path d="M47.7 567v2.5" stroke="#c8c8c8" stroke-width="1"/><path d="M57.2 567v2.5" stroke="#c8c8c8" stroke-width="1"/><path d="M66.6 567v2.5" stroke="#c8c8c8" stroke-width="1"/><path d="M76.0 567v2.5" stroke="#c8c8c8" stroke-width="1"/><path d="M85.4 567v2.5" stroke="#c8c8c8" stroke-width="1"/><path d="M94.8 567v2.5" stroke="#c8c8c8" stroke-width="1"/><path d="M104.3 567v2.5" stroke="#c8c8c8" stroke-width="1"/><path d="M113.7 567v2.5" stroke="#c8c8c8" stroke-width="1"/><path d="M123.1 567v4" stroke="#c8c8c8" stroke-width="1"/><path d="M132.5 567v2.5" stroke="#c8c8c8" stroke-width="1"/><path d="M141.9 567v2.5" stroke="#c8c8c8" stroke-width="1"/><path d="M151.4 567v2.5" stroke="#c8c8c8" stroke-width="1"/><path d="M160.8 567v2.5" stroke="#c8c8c8" stroke-width="1"/><path d="M170.2 567v2.5" stroke="#c8c8c8" stroke-width="1"/><path d="M179.6 567v2.5" stroke="#c8c8c8" stroke-width="1"/><path d="M189.0 567v2.5" stroke="#c8c8c8" stroke-width="1"/><path d="M198.5 567v2.5" stroke="#c8c8c8" stroke-width="1"/><path d="M207.9 567v2.5" stroke="#c8c8c8" stroke-width="1"/><path d="M217.3 567v4" stroke="#c8c8c8" stroke-width="1"/><path d="M226.7 567v2.5" stroke="#c8c8c8" stroke-width="1"/><path d="M236.1 567v2.5" stroke="#c8c8c8" stroke-width="1"/><path d="M245.6 567v2.5" stroke="#c8c8c8" stroke-width="1"/></svg>
<div class="t c" style="left:29px;top:575.5px;font-size:9.800px;color:#fff;">433.800</div>
<div class="t c" style="left:123px;top:575.5px;font-size:9.800px;color:#fff;">434.000</div>
<div class="t c" style="left:217px;top:575.5px;font-size:9.800px;color:#fff;">434.200</div>
<div class="a" style="left:0px;top:588px;width:247px;height:110px;background:linear-gradient(90deg,#02021e 0,#03052a 40px,#050832 46px,#0a1248 62px,#14246a 69px,#2c48a4 85px,#3c5cc4 99px,#5a82ea 101px,#7098fa 112px,#7ca4ff 123px,#78a0fe 130px,#5a82ea 139px,#3e60c6 150px,#2c46a2 160px,#182a72 168px,#0a1246 180px,#050832 198px,#03052a 210px,#02021e 247px);"></div>
<svg class="a" style="left:0;top:588px" width="247" height="110" viewBox="0 0 247 110"><defs><filter id="nzi" x="0" y="0" width="100%" height="100%"><feTurbulence type="fractalNoise" baseFrequency=".9" numOctaves="2" seed="5"/><feColorMatrix type="matrix" values="0 0 0 0 .5  0 0 0 0 .6  0 0 0 0 1  0 0 0 1.600 -.550"/></filter><filter id="ndi" x="0" y="0" width="100%" height="100%"><feTurbulence type="fractalNoise" baseFrequency=".85" numOctaves="2" seed="8"/><feColorMatrix type="matrix" values="0 0 0 0 0  0 0 0 0 0  0 0 0 0 .1  0 0 0 1.600 -.550"/></filter><filter id="bl" x="-20%" y="-20%" width="140%" height="140%"><feGaussianBlur stdDeviation="4 2.500"/></filter><linearGradient id="nmi" x1="0" y1="0" x2="1" y2="0"><stop offset="0" stop-color="#fff" stop-opacity=".02"/><stop offset=".25" stop-color="#fff" stop-opacity=".06"/><stop offset=".4" stop-color="#fff" stop-opacity=".4"/><stop offset=".6" stop-color="#fff" stop-opacity=".4"/><stop offset=".72" stop-color="#fff" stop-opacity=".08"/><stop offset="1" stop-color="#fff" stop-opacity=".02"/></linearGradient><mask id="mki"><rect width="247" height="110" fill="url(#nmi)"/></mask></defs><rect x="50" y="33" width="22" height="9" fill="#03052a" opacity=".8" filter="url(#bl)"/><rect x="50" y="47" width="20" height="8" fill="#03052a" opacity=".8" filter="url(#bl)"/><rect x="56" y="62" width="18" height="6" fill="#03052a" opacity=".8" filter="url(#bl)"/><rect x="168" y="33" width="24" height="10" fill="#03052a" opacity=".8" filter="url(#bl)"/><rect x="170" y="48" width="22" height="8" fill="#03052a" opacity=".8" filter="url(#bl)"/><rect x="172" y="62" width="20" height="7" fill="#03052a" opacity=".8" filter="url(#bl)"/><g mask="url(#mki)"><rect width="247" height="110" filter="url(#nzi)"/><rect width="247" height="110" filter="url(#ndi)"/></g><path d="M7.5 0V110" stroke="#4a66d0" stroke-width="1" opacity="0.75"/><path d="M25.5 0V110" stroke="#3450b0" stroke-width="1" opacity="0.35"/><path d="M30.5 0V110" stroke="#3450b0" stroke-width="1" opacity="0.45"/><path d="M38.5 0V110" stroke="#3450b0" stroke-width="1" opacity="0.3"/><path d="M54.5 0V110" stroke="#3050b8" stroke-width="1" opacity="0.35"/><path d="M101.5 0V110" stroke="#86a8ff" stroke-width="1" opacity="0.35"/><path d="M160.5 0V110" stroke="#7898f0" stroke-width="1" opacity="0.35"/><path d="M172.5 0V110" stroke="#6a8cf0" stroke-width="1" opacity="0.3"/><path d="M187.5 0V110" stroke="#3858c0" stroke-width="1" opacity="0.3"/><path d="M202.5 0V110" stroke="#3858c0" stroke-width="1" opacity="0.35"/><path d="M218.5 0V110" stroke="#4466d0" stroke-width="1" opacity="0.45"/><path d="M41.5 2V108" stroke="#3ec83e" stroke-width="1" stroke-dasharray="2 2" opacity=".9"/><path d="M205.5 2V108" stroke="#3ec83e" stroke-width="1" stroke-dasharray="2 2" opacity=".9"/><path d="M123.500 2V108" stroke="#143c14" stroke-width="1" stroke-dasharray="3 2"/></svg>
<div class="ph" style="top:698px;height:18px;"><b>Mode</b></div>
<div class="a" style="left:233px;top:702px;width:9px;height:9px;background:#f4f4f4;border:1px solid #bdbdbd;border-right-color:#8c8c8c;border-bottom-color:#8c8c8c;"></div>
<svg class="a" style="left:234.5px;top:704.5px;" width="6" height="4" viewBox="0 0 6 4"><path d="M0 4h6L3 0z" fill="#111"/></svg>
<div class="a" style="left:0px;top:716px;width:247px;height:127px;background:#000;"></div>
<div class="btn" style="left:9px;top:726px;"><i style="position:absolute;left:20px;top:9.500px;width:3px;height:3px;background:#fff;border-radius:1px;box-shadow:7.500px 0 0 #fff,15px 0 0 #fff"></i></div>
<div class="btn" style="left:73px;top:726px;"><span>AM</span></div>
<div class="btn" style="left:137px;top:726px;"><span>SAM</span></div>
<div class="btn" style="left:9px;top:754px;"><span>CW-U</span></div>
<div class="btn sel" style="left:73px;top:754px;"><span>BFM</span></div>
<div class="btn" style="left:137px;top:754px;"><span>NFM</span></div>
<div class="btn" style="left:9px;top:782px;"><span>WFM</span></div>
<div class="btn" style="left:73px;top:782px;"><span>LSB</span></div>
<div class="btn" style="left:137px;top:782px;"><span>USB</span></div>
<div class="btn" style="left:9px;top:810px;"><span>Wide-U</span></div>
<div class="ph" style="top:843px;height:18px;"><b style="letter-spacing:-.550px">Filter</b></div>
<svg class="a" style="left:234px;top:850px;" width="7" height="5" viewBox="0 0 7 5"><path d="M0 4.500h7L3.500 0z" fill="#111"/></svg>
<div class="a" style="left:0px;top:861px;width:247px;height:127px;background:#000;"></div>
<div class="btn" style="left:9px;top:871px;"><i style="position:absolute;left:20px;top:9.500px;width:3px;height:3px;background:#fff;border-radius:1px;box-shadow:7.500px 0 0 #fff,15px 0 0 #fff"></i></div>
<div class="btn" style="left:73px;top:871px;"><span>100kHz</span></div>
<div class="btn" style="left:137px;top:871px;"><span>125kHz</span></div>
<div class="btn" style="left:9px;top:899px;"><span>150kHz</span></div>
<div class="btn" style="left:73px;top:899px;"><span>175kHz</span></div>
<div class="btn" style="left:137px;top:899px;"><span>200kHz</span></div>
<div class="btn" style="left:9px;top:927px;"><span>225kHz</span></div>
<div class="btn" style="left:73px;top:927px;"><span>250kHz</span></div>
<div class="btn" style="left:137px;top:927px;"><span>275kHz</span></div>
<div class="btn" style="left:9px;top:955px;"><span>300kHz</span></div>
<div class="btn" style="left:73px;top:955px;"><span>325kHz</span></div>
<div class="btn sel" style="left:137px;top:955px;"><span>350kHz</span></div>
<div class="ph" style="top:988px;height:18px;"><b style="letter-spacing:-.800px">AGC: Off</b></div>
<svg class="a" style="left:234px;top:996px;" width="7" height="5" viewBox="0 0 7 5"><path d="M0 4.500h7L3.500 0z" fill="#111"/></svg>
<div class="a" style="left:0px;top:1006px;width:247px;height:18px;background:#f0f0f0;overflow:hidden;"><div class="a" style="left:4px;top:5px;width:37px;height:22px;background:#d4d4d4;border:1px solid #c0c0c0;color:#9c9c9c;font-size:11px;text-align:center;line-height:20px;">Off</div><div class="a" style="left:43px;top:5px;width:37px;height:22px;background:#d4d4d4;border:1px solid #c0c0c0;color:#9c9c9c;font-size:11px;text-align:center;line-height:20px;">Fast</div><div class="a" style="left:82px;top:5px;width:37px;height:22px;background:#d4d4d4;border:1px solid #c0c0c0;color:#9c9c9c;font-size:11px;text-align:center;line-height:20px;">Med</div><div class="a" style="left:121px;top:5px;width:37px;height:22px;background:#d4d4d4;border:1px solid #c0c0c0;color:#9c9c9c;font-size:11px;text-align:center;line-height:20px;">Slow</div></div>
<svg class="a" style="left:171px;top:1014px;" width="20" height="10" viewBox="0 0 20 10"><path d="M1 7l6-6v3.500c6-1 10 1.500 11 5.500-2.500-2.500-6-3-11-2.500V11z" fill="#111"/></svg>
<svg class="a" style="left:201px;top:1016px;" width="18" height="8" viewBox="0 0 18 8"><rect x=".5" y="1.500" width="16" height="8" fill="#f4f8fc" stroke="#8aa8c8"/><path d="M3 4.500h10M3 6.500h10" stroke="#8aa8c8" stroke-dasharray="2 1"/></svg>
<svg class="a" style="left:232px;top:1013px;" width="15" height="12" viewBox="0 0 15 12"><path d="M1.500 0v11" stroke="#222"/><path d="M5 10l3-5 2 2.500 3-6" stroke="#444" fill="none"/></svg>
<div class="a" style="left:268px;top:146px;width:1612px;height:526px;background:linear-gradient(#000 0,#050505 25%,#0f0f0f 60%,#1a1a1a 100%);"></div>
<div class="a" style="left:1880px;top:146px;width:1px;height:877px;background:#8a8a8a;"></div>
<div class="a" style="left:888px;top:148px;width:565px;height:523px;background:linear-gradient(#056605 0,#066006 19%,#0c540c 35%,#19411a 52%,#213322 67%,#282b28 86%,#2c2c2c 100%);border-left:1px solid #46b446;border-right:1px solid #46b446;"></div>
<div class="a" style="left:888px;top:148px;width:565px;height:6px;background:linear-gradient(90deg,#12b012 0,#1cc01c 20%,#6cff6c 50%,#1cc01c 80%,#12b012 100%);"></div>
<div class="a" style="left:888px;top:665px;width:565px;height:6px;background:linear-gradient(90deg,#1c901c 0,#2a9a2a 20%,#88c888 50%,#2a9a2a 80%,#1c901c 100%);"></div>
<div class="a" style="left:889px;top:183px;width:563px;height:2px;background:#2aa82a;"></div>
<svg class="a" style="left:268px;top:146px" width="1612" height="526" viewBox="268 146 1612 526"><path d="M321 159.5H328M617 159.5H1828" stroke="#8c8c8c" stroke-width="1" stroke-dasharray="1 3" opacity=".78"/><path d="M321 179.83H1828" stroke="#8c8c8c" stroke-width="1" stroke-dasharray="1 3" opacity=".78"/><path d="M321 200.17H1828" stroke="#8c8c8c" stroke-width="1" stroke-dasharray="1 3" opacity=".78"/><path d="M321 220.5H1828" stroke="#8c8c8c" stroke-width="1" stroke-dasharray="1 3" opacity=".78"/><path d="M321 240.83H1828" stroke="#8c8c8c" stroke-width="1" stroke-dasharray="1 3" opacity=".78"/><path d="M321 261.16H1828" stroke="#8c8c8c" stroke-width="1" stroke-dasharray="1 3" opacity=".78"/><path d="M321 281.5H1828" stroke="#8c8c8c" stroke-width="1" stroke-dasharray="1 3" opacity=".78"/><path d="M321 301.83H1828" stroke="#8c8c8c" stroke-width="1" stroke-dasharray="1 3" opacity=".78"/><path d="M321 322.16H1828" stroke="#8c8c8c" stroke-width="1" stroke-dasharray="1 3" opacity=".78"/><path d="M321 342.5H1828" stroke="#8c8c8c" stroke-width="1" stroke-dasharray="1 3" opacity=".78"/><path d="M321 362.83H1828" stroke="#8c8c8c" stroke-width="1" stroke-dasharray="1 3" opacity=".78"/><path d="M321 383.16H1828" stroke="#8c8c8c" stroke-width="1" stroke-dasharray="1 3" opacity=".78"/><path d="M321 403.5H1828" stroke="#8c8c8c" stroke-width="1" stroke-dasharray="1 3" opacity=".78"/><path d="M321 423.83H1828" stroke="#8c8c8c" stroke-width="1" stroke-dasharray="1 3" opacity=".78"/><path d="M321 444.16H1828" stroke="#8c8c8c" stroke-width="1" stroke-dasharray="1 3" opacity=".78"/><path d="M321 464.49H1828" stroke="#8c8c8c" stroke-width="1" stroke-dasharray="1 3" opacity=".78"/><path d="M321 484.83H1828" stroke="#8c8c8c" stroke-width="1" stroke-dasharray="1 3" opacity=".78"/><path d="M321 505.16H1828" stroke="#8c8c8c" stroke-width="1" stroke-dasharray="1 3" opacity=".78"/><path d="M321 525.49H1828" stroke="#8c8c8c" stroke-width="1" stroke-dasharray="1 3" opacity=".78"/><path d="M321 545.83H1828" stroke="#8c8c8c" stroke-width="1" stroke-dasharray="1 3" opacity=".78"/><path d="M321 566.16H1828" stroke="#8c8c8c" stroke-width="1" stroke-dasharray="1 3" opacity=".78"/><path d="M321 586.49H1828" stroke="#8c8c8c" stroke-width="1" stroke-dasharray="1 3" opacity=".78"/><path d="M321 606.83H1828" stroke="#8c8c8c" stroke-width="1" stroke-dasharray="1 3" opacity=".78"/><path d="M321 627.16H1828" stroke="#8c8c8c" stroke-width="1" stroke-dasharray="1 3" opacity=".78"/><path d="M321 647.49H1828" stroke="#8c8c8c" stroke-width="1" stroke-dasharray="1 3" opacity=".78"/><path d="M1170.500 174V665" stroke="#5ce05c" stroke-width="1" stroke-dasharray="4 3"/><path d="M268.0 592.2 L269.1 598.4 L270.2 591.7 L271.3 596.6 L272.4 592.1 L273.5 591.8 L274.6 602.8 L275.7 592.7 L276.8 602.3 L277.9 595.4 L279.0 597.5 L280.1 597.1 L281.2 600.9 L282.3 597.4 L283.4 591.0 L284.5 576.0 L285.6 593.4 L286.7 597.2 L287.8 599.7 L288.9 591.2 L290.0 568.0 L291.1 597.7 L292.2 598.4 L293.3 593.0 L294.4 598.9 L295.5 596.1 L296.6 600.0 L297.7 595.6 L298.8 596.6 L299.9 593.0 L301.0 602.4 L302.1 594.4 L303.2 596.9 L304.3 596.6 L305.4 591.8 L306.5 594.1 L307.6 599.4 L308.7 599.7 L309.8 596.2 L310.9 598.5 L312.0 592.7 L313.1 603.0 L314.2 598.7 L315.3 590.8 L316.4 595.9 L317.5 598.1 L318.6 594.6 L319.7 596.5 L320.8 595.2 L321.9 600.2 L323.0 599.2 L324.1 593.7 L325.2 595.7 L326.3 596.7 L327.4 594.6 L328.5 597.1 L329.6 597.7 L330.7 603.5 L331.8 585.0 L332.9 595.2 L334.0 593.5 L335.1 591.4 L336.2 593.5 L337.3 596.5 L338.4 594.8 L339.5 599.0 L340.6 592.3 L341.7 598.1 L342.8 592.5 L343.9 594.2 L345.0 591.8 L346.1 592.6 L347.2 599.1 L348.3 592.7 L349.4 586.4 L350.5 594.0 L351.6 593.9 L352.7 592.9 L353.8 592.5 L354.9 589.5 L356.0 586.7 L357.1 590.9 L358.2 590.6 L359.3 585.9 L360.4 589.1 L361.5 584.7 L362.6 594.3 L363.7 584.7 L364.8 588.3 L365.9 595.5 L367.0 577.0 L368.1 582.4 L369.2 587.0 L370.3 595.8 L371.4 592.5 L372.5 584.2 L373.6 588.7 L374.7 591.7 L375.8 584.7 L376.9 580.9 L378.0 590.0 L379.1 588.7 L380.2 588.7 L381.3 587.3 L382.4 589.5 L383.5 588.4 L384.6 597.4 L385.7 586.3 L386.8 589.5 L387.9 592.1 L389.0 593.7 L390.1 585.0 L391.2 592.0 L392.3 593.5 L393.4 585.0 L394.5 592.4 L395.6 595.3 L396.7 580.0 L397.8 590.4 L398.9 590.7 L400.0 582.8 L401.1 595.3 L402.2 596.0 L403.3 589.8 L404.4 593.8 L405.5 590.0 L406.6 584.4 L407.7 582.4 L408.8 589.5 L409.9 586.9 L411.0 587.4 L412.1 585.4 L413.2 586.1 L414.3 583.1 L415.4 582.0 L416.5 591.6 L417.6 592.9 L418.7 584.6 L419.8 581.0 L420.9 580.8 L422.0 591.7 L423.1 581.7 L424.2 584.7 L425.3 583.9 L426.4 582.0 L427.5 580.9 L428.6 596.1 L429.7 584.0 L430.8 581.4 L431.9 592.7 L433.0 588.4 L434.1 586.6 L435.2 583.4 L436.3 584.2 L437.4 584.7 L438.5 581.5 L439.6 585.0 L440.7 585.1 L441.8 586.4 L442.9 578.0 L444.0 584.4 L445.1 582.1 L446.2 580.8 L447.3 588.3 L448.4 584.8 L449.5 577.7 L450.6 586.4 L451.7 574.5 L452.8 585.9 L453.9 580.1 L455.0 576.4 L456.1 571.8 L457.2 576.6 L458.3 579.9 L459.4 574.1 L460.5 580.2 L461.6 571.3 L462.7 584.4 L463.8 577.1 L464.9 552.0 L466.0 582.2 L467.1 575.8 L468.2 571.6 L469.3 571.9 L470.4 580.2 L471.5 577.8 L472.6 575.6 L473.7 580.2 L474.8 576.4 L475.9 574.4 L477.0 577.7 L478.1 580.5 L479.2 571.6 L480.3 577.9 L481.4 571.4 L482.5 570.9 L483.6 568.8 L484.7 569.5 L485.8 577.3 L486.9 566.1 L488.0 576.1 L489.1 572.2 L490.2 556.0 L491.3 575.1 L492.4 578.8 L493.5 576.7 L494.6 575.0 L495.7 570.8 L496.8 568.2 L497.9 563.6 L499.0 564.7 L500.1 570.7 L501.2 571.2 L502.3 565.9 L503.4 564.9 L504.5 569.1 L505.6 571.3 L506.7 576.0 L507.8 569.6 L508.9 568.9 L510.0 568.1 L511.1 563.9 L512.2 555.7 L513.3 568.9 L514.4 568.1 L515.5 569.9 L516.6 566.4 L517.7 560.0 L518.8 566.8 L519.9 558.8 L521.0 559.8 L522.1 566.8 L523.2 564.5 L524.3 560.3 L525.4 564.0 L526.5 555.3 L527.6 566.4 L528.7 557.6 L529.8 556.1 L530.9 564.4 L532.0 560.0 L533.1 560.4 L534.2 557.9 L535.3 557.5 L536.4 556.2 L537.5 563.7 L538.6 545.7 L539.7 568.7 L540.8 552.5 L541.9 538.0 L543.0 553.0 L544.1 560.8 L545.2 559.0 L546.3 558.0 L547.4 545.8 L548.5 555.2 L549.6 550.8 L550.7 549.6 L551.8 554.8 L552.9 553.3 L554.0 551.8 L555.1 554.3 L556.2 562.3 L557.3 556.6 L558.4 549.9 L559.5 550.5 L560.6 549.4 L561.7 550.8 L562.8 550.9 L563.9 551.7 L565.0 544.7 L566.1 548.2 L567.2 552.0 L568.3 549.7 L569.4 539.5 L570.5 551.1 L571.6 555.1 L572.7 546.6 L573.8 550.9 L574.9 543.6 L576.0 539.9 L577.1 548.5 L578.2 542.1 L579.3 549.2 L580.4 543.4 L581.5 544.6 L582.6 556.0 L583.7 545.9 L584.8 552.0 L585.9 550.9 L587.0 543.3 L588.1 547.4 L589.2 540.1 L590.3 541.4 L591.4 544.2 L592.5 554.8 L593.6 544.9 L594.7 543.7 L595.8 541.8 L596.9 541.5 L598.0 547.5 L599.1 545.3 L600.2 538.8 L601.3 544.9 L602.4 541.2 L603.5 533.7 L604.6 542.8 L605.7 535.5 L606.8 537.6 L607.9 541.4 L609.0 533.1 L610.1 529.8 L611.2 539.0 L612.3 530.1 L613.4 545.2 L614.5 542.9 L615.6 534.0 L616.7 536.1 L617.8 523.0 L618.9 535.7 L620.0 539.9 L621.1 538.5 L622.2 536.3 L623.3 538.8 L624.4 535.3 L625.5 537.9 L626.6 544.4 L627.7 531.7 L628.8 537.2 L629.9 532.9 L631.0 543.5 L632.1 532.5 L633.2 533.2 L634.3 538.3 L635.4 537.2 L636.5 540.1 L637.6 537.8 L638.7 530.8 L639.8 531.8 L640.9 532.8 L642.0 525.5 L643.1 530.5 L644.2 539.1 L645.3 536.4 L646.4 539.9 L647.5 537.4 L648.6 532.7 L649.7 532.4 L650.8 534.0 L651.9 536.6 L653.0 534.1 L654.1 529.7 L655.2 531.3 L656.3 529.4 L657.4 531.0 L658.5 524.8 L659.6 529.2 L660.7 526.3 L661.8 540.4 L662.9 526.5 L664.0 531.1 L665.1 525.9 L666.2 536.6 L667.3 537.7 L668.4 533.9 L669.5 534.8 L670.6 533.8 L671.7 532.2 L672.8 528.3 L673.9 526.9 L675.0 527.3 L676.1 530.0 L677.2 533.2 L678.3 534.6 L679.4 529.7 L680.5 530.4 L681.6 535.0 L682.7 537.7 L683.8 533.6 L684.9 527.7 L686.0 534.8 L687.1 529.8 L688.2 521.1 L689.3 531.8 L690.4 507.0 L691.5 534.6 L692.6 537.1 L693.7 525.6 L694.8 490.0 L695.9 536.2 L697.0 532.4 L698.1 533.0 L699.2 534.2 L700.3 527.6 L701.4 530.6 L702.5 535.9 L703.6 538.4 L704.7 531.3 L705.8 534.0 L706.9 532.9 L708.0 527.0 L709.1 532.0 L710.2 533.6 L711.3 529.0 L712.4 533.1 L713.5 530.8 L714.6 527.1 L715.7 530.5 L716.8 530.6 L717.9 535.0 L719.0 525.9 L720.1 533.3 L721.2 535.1 L722.3 534.5 L723.4 530.0 L724.5 527.2 L725.6 532.7 L726.7 529.4 L727.8 533.2 L728.9 529.9 L730.0 529.0 L731.1 536.0 L732.2 528.1 L733.3 536.3 L734.4 532.3 L735.5 529.3 L736.6 532.3 L737.7 529.4 L738.8 534.0 L739.9 534.3 L741.0 534.7 L742.1 536.5 L743.2 535.3 L744.3 534.4 L745.4 531.6 L746.5 533.7 L747.6 527.2 L748.7 532.4 L749.8 530.1 L750.9 530.0 L752.0 529.3 L753.1 522.2 L754.2 532.1 L755.3 532.1 L756.4 531.5 L757.5 531.1 L758.6 534.3 L759.7 525.4 L760.8 533.4 L761.9 524.1 L763.0 530.3 L764.1 532.4 L765.2 526.2 L766.3 531.7 L767.4 537.5 L768.5 530.4 L769.6 532.4 L770.7 537.3 L771.8 535.5 L772.9 484.0 L774.0 534.2 L775.1 531.8 L776.2 527.5 L777.3 530.2 L778.4 539.2 L779.5 531.7 L780.6 533.4 L781.7 528.9 L782.8 525.0 L783.9 528.1 L785.0 532.1 L786.1 531.5 L787.2 536.2 L788.3 528.6 L789.4 530.3 L790.5 526.6 L791.6 532.8 L792.7 530.4 L793.8 526.1 L794.9 533.1 L796.0 529.2 L797.1 534.5 L798.2 534.9 L799.3 530.5 L800.4 525.4 L801.5 526.2 L802.6 526.2 L803.7 522.3 L804.8 535.7 L805.9 527.9 L807.0 523.3 L808.1 529.8 L809.2 523.5 L810.3 526.8 L811.4 533.2 L812.5 529.2 L813.6 521.6 L814.7 523.1 L815.8 528.5 L816.9 527.3 L818.0 525.3 L819.1 526.9 L820.2 526.2 L821.3 529.1 L822.4 533.4 L823.5 529.1 L824.6 528.0 L825.7 522.1 L826.8 524.9 L827.9 519.8 L829.0 525.2 L830.1 522.6 L831.2 527.2 L832.3 524.2 L833.4 531.6 L834.5 527.0 L835.6 517.3 L836.7 527.6 L837.8 521.7 L838.9 527.4 L840.0 520.4 L841.1 523.3 L842.2 524.7 L843.3 521.0 L844.4 520.0 L845.5 522.6 L846.6 523.6 L847.7 527.1 L848.8 523.4 L849.9 493.0 L851.0 527.7 L852.1 516.6 L853.2 518.0 L854.3 512.2 L855.4 521.2 L856.5 523.8 L857.6 521.6 L858.7 522.8 L859.8 516.0 L860.9 524.1 L862.0 520.3 L863.1 523.1 L864.2 518.8 L865.3 525.1 L866.4 515.1 L867.5 515.3 L868.6 518.8 L869.7 522.2 L870.8 517.8 L871.9 525.6 L873.0 516.7 L874.1 518.3 L875.2 500.0 L876.3 519.8 L877.4 523.0 L878.5 516.8 L879.6 502.0 L880.7 515.7 L881.8 513.9 L882.9 518.0 L884.0 508.9 L885.1 517.1 L886.2 521.0 L887.3 522.8 L888.4 519.1 L889.5 511.3 L890.6 515.4 L891.7 518.7 L892.8 480.0 L893.9 520.3 L895.0 521.2 L896.1 512.6 L897.2 516.3 L898.3 522.2 L899.4 528.5 L900.5 524.8 L901.6 521.9 L902.7 518.6 L903.8 524.7 L904.9 522.5 L906.0 521.3 L907.1 527.1 L908.2 523.4 L909.3 524.8 L910.4 525.6 L911.5 516.4 L912.6 520.8 L913.7 519.3 L914.8 523.7 L915.9 511.6 L917.0 523.1 L918.1 522.2 L919.2 525.9 L920.3 526.6 L921.4 506.0 L922.5 524.3 L923.6 523.7 L924.7 521.3 L925.8 524.5 L926.9 528.7 L928.0 518.8 L929.1 529.0 L930.2 524.1 L931.3 524.0 L932.4 528.0 L933.5 521.9 L934.6 520.4 L935.7 529.4 L936.8 526.3 L937.9 528.7 L939.0 527.0 L940.1 527.9 L941.2 524.3 L942.3 528.5 L943.4 526.3 L944.5 522.7 L945.6 522.9 L946.7 516.8 L947.8 523.0 L948.9 526.2 L950.0 522.1 L951.1 525.2 L952.2 518.2 L953.3 525.7 L954.4 523.8 L955.5 520.9 L956.6 522.4 L957.7 517.8 L958.8 522.5 L959.9 516.4 L961.0 517.8 L962.1 517.5 L963.2 515.8 L964.3 516.5 L965.4 515.7 L966.5 511.1 L967.6 514.5 L968.7 520.1 L969.8 516.0 L970.9 512.2 L972.0 507.5 L973.1 513.8 L974.2 515.6 L975.3 503.5 L976.4 513.4 L977.5 509.7 L978.6 516.7 L979.7 508.0 L980.8 512.2 L981.9 510.6 L983.0 506.1 L984.1 509.7 L985.2 509.1 L986.3 509.5 L987.4 505.0 L988.5 503.6 L989.6 503.5 L990.7 505.5 L991.8 494.2 L992.9 501.8 L994.0 500.5 L995.1 503.6 L996.2 498.8 L997.3 496.9 L998.4 503.8 L999.5 497.3 L1000.6 500.8 L1001.7 502.2 L1002.8 495.4 L1003.9 500.9 L1005.0 493.8 L1006.1 493.2 L1007.2 494.9 L1008.3 501.5 L1009.4 495.6 L1010.5 493.8 L1011.6 492.6 L1012.7 496.1 L1013.8 493.4 L1014.9 494.3 L1016.0 495.6 L1017.1 491.0 L1018.2 485.6 L1019.3 490.0 L1020.4 483.5 L1021.5 486.4 L1022.6 484.3 L1023.7 493.3 L1024.8 485.4 L1025.9 481.8 L1027.0 488.5 L1028.1 489.3 L1029.2 483.1 L1030.3 486.3 L1031.4 484.0 L1032.5 485.7 L1033.6 481.0 L1034.7 482.0 L1035.8 485.8 L1036.9 484.4 L1038.0 481.4 L1039.1 476.8 L1040.2 480.9 L1041.3 478.9 L1042.4 480.3 L1043.5 475.8 L1044.6 477.9 L1045.7 475.3 L1046.8 481.2 L1047.9 472.2 L1049.0 475.7 L1050.1 472.1 L1051.2 478.4 L1052.3 478.0 L1053.4 475.6 L1054.5 475.5 L1055.6 476.3 L1056.7 473.9 L1057.8 471.5 L1058.9 471.0 L1060.0 478.0 L1061.1 469.3 L1062.2 470.2 L1063.3 460.2 L1064.4 473.8 L1065.5 469.7 L1066.6 466.0 L1067.7 472.9 L1068.8 463.0 L1069.9 468.6 L1071.0 461.0 L1072.1 467.4 L1073.2 464.6 L1074.3 464.1 L1075.4 461.6 L1076.5 464.3 L1077.6 463.6 L1078.7 458.8 L1079.8 456.8 L1080.9 458.4 L1082.0 454.9 L1083.1 455.0 L1084.2 452.3 L1085.3 452.9 L1086.4 452.8 L1087.5 449.5 L1088.6 443.3 L1089.7 444.6 L1090.8 442.3 L1091.9 438.0 L1093.0 445.9 L1094.1 427.9 L1095.2 428.7 L1096.3 427.9 L1097.4 430.6 L1098.5 428.7 L1099.6 426.3 L1100.7 426.2 L1101.8 429.8 L1102.9 425.6 L1104.0 424.5 L1105.1 420.9 L1106.2 424.8 L1107.3 413.7 L1108.4 418.5 L1109.5 425.2 L1110.6 426.1 L1111.7 422.2 L1112.8 418.0 L1113.9 424.6 L1115.0 418.8 L1116.1 418.1 L1117.2 419.6 L1118.3 421.2 L1119.4 421.0 L1120.5 424.7 L1121.6 419.8 L1122.7 420.2 L1123.8 418.1 L1124.9 418.5 L1126.0 416.2 L1127.1 421.4 L1128.2 419.6 L1129.3 415.2 L1130.4 420.4 L1131.5 416.4 L1132.6 412.0 L1133.7 418.9 L1134.8 412.3 L1135.9 408.3 L1137.0 409.0 L1138.1 422.8 L1139.2 411.3 L1140.3 417.7 L1141.4 419.1 L1142.5 409.7 L1143.6 412.1 L1144.7 412.7 L1145.8 408.4 L1146.9 414.2 L1148.0 413.1 L1149.1 416.7 L1150.2 416.5 L1151.3 412.5 L1152.4 404.9 L1153.5 406.6 L1154.6 415.9 L1155.7 409.9 L1156.8 413.1 L1157.9 409.1 L1159.0 412.8 L1160.1 408.4 L1161.2 403.7 L1162.3 401.6 L1163.4 397.1 L1164.5 406.4 L1165.6 406.5 L1166.7 404.9 L1167.8 401.1 L1168.9 406.3 L1170.0 407.2 L1171.1 407.2 L1172.2 406.0 L1173.3 408.8 L1174.4 409.4 L1175.5 405.0 L1176.6 411.1 L1177.7 407.4 L1178.8 413.9 L1179.9 405.3 L1181.0 405.5 L1182.1 415.0 L1183.2 420.1 L1184.3 416.0 L1185.4 416.0 L1186.5 408.9 L1187.6 412.5 L1188.7 413.7 L1189.8 412.1 L1190.9 412.4 L1192.0 415.5 L1193.1 416.8 L1194.2 416.8 L1195.3 417.3 L1196.4 415.2 L1197.5 418.7 L1198.6 417.2 L1199.7 414.8 L1200.8 421.1 L1201.9 422.3 L1203.0 415.9 L1204.1 421.3 L1205.2 416.8 L1206.3 424.3 L1207.4 419.0 L1208.5 427.4 L1209.6 419.6 L1210.7 418.3 L1211.8 421.7 L1212.9 417.8 L1214.0 420.3 L1215.1 424.4 L1216.2 423.0 L1217.3 430.5 L1218.4 425.4 L1219.5 429.0 L1220.6 426.7 L1221.7 432.0 L1222.8 428.3 L1223.9 430.8 L1225.0 437.0 L1226.1 437.2 L1227.2 435.4 L1228.3 435.4 L1229.4 443.9 L1230.5 441.2 L1231.6 438.8 L1232.7 443.3 L1233.8 452.7 L1234.9 443.2 L1236.0 448.3 L1237.1 442.9 L1238.2 451.6 L1239.3 450.8 L1240.4 452.4 L1241.5 461.3 L1242.6 454.7 L1243.7 456.3 L1244.8 457.2 L1245.9 460.3 L1247.0 457.5 L1248.1 465.1 L1249.2 455.9 L1250.3 464.4 L1251.4 463.9 L1252.5 464.3 L1253.6 464.6 L1254.7 467.3 L1255.8 466.6 L1256.9 468.7 L1258.0 472.6 L1259.1 471.7 L1260.2 466.1 L1261.3 473.9 L1262.4 467.5 L1263.5 470.1 L1264.6 473.0 L1265.7 470.7 L1266.8 468.9 L1267.9 475.7 L1269.0 473.2 L1270.1 474.3 L1271.2 474.0 L1272.3 469.7 L1273.4 476.9 L1274.5 476.1 L1275.6 467.2 L1276.7 471.7 L1277.8 477.0 L1278.9 479.2 L1280.0 473.2 L1281.1 478.7 L1282.2 475.1 L1283.3 477.4 L1284.4 477.7 L1285.5 484.8 L1286.6 476.6 L1287.7 481.9 L1288.8 479.6 L1289.9 481.3 L1291.0 477.2 L1292.1 480.9 L1293.2 484.5 L1294.3 484.1 L1295.4 483.3 L1296.5 468.0 L1297.6 483.7 L1298.7 483.5 L1299.8 481.0 L1300.9 487.7 L1302.0 481.4 L1303.1 470.0 L1304.2 476.7 L1305.3 485.6 L1306.4 485.8 L1307.5 492.8 L1308.6 485.2 L1309.7 489.4 L1310.8 494.5 L1311.9 488.1 L1313.0 491.7 L1314.1 477.6 L1315.2 494.5 L1316.3 491.9 L1317.4 490.5 L1318.5 490.9 L1319.6 491.5 L1320.7 492.3 L1321.8 489.0 L1322.9 485.2 L1324.0 495.1 L1325.1 491.6 L1326.2 492.4 L1327.3 497.5 L1328.4 496.9 L1329.5 496.4 L1330.6 496.3 L1331.7 483.0 L1332.8 496.7 L1333.9 507.9 L1335.0 501.8 L1336.1 505.0 L1337.2 481.0 L1338.3 502.5 L1339.4 500.1 L1340.5 507.7 L1341.6 503.7 L1342.7 502.6 L1343.8 506.2 L1344.9 505.0 L1346.0 506.5 L1347.1 509.9 L1348.2 505.7 L1349.3 509.2 L1350.4 507.5 L1351.5 514.3 L1352.6 509.2 L1353.7 516.7 L1354.8 512.3 L1355.9 509.3 L1357.0 515.7 L1358.1 512.0 L1359.2 512.4 L1360.3 513.2 L1361.4 512.8 L1362.5 517.8 L1363.6 519.3 L1364.7 512.6 L1365.8 513.9 L1366.9 516.3 L1368.0 523.7 L1369.1 517.0 L1370.2 519.6 L1371.3 517.1 L1372.4 518.4 L1373.5 519.0 L1374.6 526.4 L1375.7 516.3 L1376.8 526.0 L1377.9 519.8 L1379.0 521.3 L1380.1 513.8 L1381.2 522.0 L1382.3 524.9 L1383.4 519.5 L1384.5 522.5 L1385.6 515.6 L1386.7 521.9 L1387.8 525.2 L1388.9 518.9 L1390.0 517.8 L1391.1 521.5 L1392.2 522.5 L1393.3 523.8 L1394.4 523.3 L1395.5 520.4 L1396.6 521.8 L1397.7 515.0 L1398.8 521.5 L1399.9 524.9 L1401.0 528.3 L1402.1 520.8 L1403.2 526.9 L1404.3 525.8 L1405.4 519.8 L1406.5 530.0 L1407.6 523.5 L1408.7 523.0 L1409.8 519.5 L1410.9 515.4 L1412.0 526.6 L1413.1 524.6 L1414.2 519.5 L1415.3 525.9 L1416.4 518.3 L1417.5 524.4 L1418.6 512.3 L1419.7 518.3 L1420.8 520.9 L1421.9 525.3 L1423.0 531.3 L1424.1 520.4 L1425.2 522.5 L1426.3 521.4 L1427.4 519.5 L1428.5 516.6 L1429.6 525.6 L1430.7 520.3 L1431.8 524.9 L1432.9 514.2 L1434.0 519.5 L1435.1 516.9 L1436.2 521.2 L1437.3 521.0 L1438.4 507.0 L1439.5 519.9 L1440.6 520.7 L1441.7 521.7 L1442.8 508.0 L1443.9 518.9 L1445.0 518.6 L1446.1 522.3 L1447.2 523.3 L1448.3 524.1 L1449.4 520.3 L1450.5 524.3 L1451.6 518.9 L1452.7 521.6 L1453.8 522.2 L1454.9 524.9 L1456.0 518.3 L1457.1 515.2 L1458.2 521.3 L1459.3 518.0 L1460.4 524.4 L1461.5 520.3 L1462.6 524.2 L1463.7 519.9 L1464.8 508.0 L1465.9 516.3 L1467.0 518.3 L1468.1 524.4 L1469.2 519.4 L1470.3 518.4 L1471.4 526.9 L1472.5 522.4 L1473.6 526.1 L1474.7 512.1 L1475.8 521.0 L1476.9 518.1 L1478.0 519.7 L1479.1 521.0 L1480.2 517.6 L1481.3 509.6 L1482.4 521.3 L1483.5 521.1 L1484.6 515.9 L1485.7 522.3 L1486.8 522.4 L1487.9 522.3 L1489.0 519.4 L1490.1 514.2 L1491.2 519.3 L1492.3 520.5 L1493.4 523.1 L1494.5 516.9 L1495.6 516.0 L1496.7 485.0 L1497.8 513.9 L1498.9 520.3 L1500.0 522.4 L1501.1 521.3 L1502.2 518.8 L1503.3 521.0 L1504.4 516.3 L1505.5 518.3 L1506.6 515.7 L1507.7 521.9 L1508.8 521.2 L1509.9 522.9 L1511.0 520.0 L1512.1 526.7 L1513.2 518.8 L1514.3 530.6 L1515.4 520.5 L1516.5 524.0 L1517.6 526.4 L1518.7 534.9 L1519.8 528.7 L1520.9 530.6 L1522.0 530.0 L1523.1 533.0 L1524.2 533.1 L1525.3 536.2 L1526.4 527.3 L1527.5 525.8 L1528.6 533.6 L1529.7 522.2 L1530.8 529.6 L1531.9 535.6 L1533.0 534.7 L1534.1 533.5 L1535.2 534.5 L1536.3 531.1 L1537.4 532.9 L1538.5 529.6 L1539.6 532.3 L1540.7 541.3 L1541.8 524.3 L1542.9 530.2 L1544.0 531.8 L1545.1 541.3 L1546.2 535.2 L1547.3 537.2 L1548.4 543.5 L1549.5 534.0 L1550.6 533.8 L1551.7 528.9 L1552.8 537.4 L1553.9 533.3 L1555.0 541.3 L1556.1 537.6 L1557.2 530.7 L1558.3 532.1 L1559.4 543.2 L1560.5 540.4 L1561.6 540.6 L1562.7 536.1 L1563.8 539.3 L1564.9 527.7 L1566.0 539.0 L1567.1 538.1 L1568.2 541.4 L1569.3 532.1 L1570.4 537.2 L1571.5 536.8 L1572.6 542.8 L1573.7 541.1 L1574.8 537.1 L1575.9 535.6 L1577.0 540.1 L1578.1 544.5 L1579.2 538.2 L1580.3 533.5 L1581.4 545.0 L1582.5 540.8 L1583.6 549.3 L1584.7 541.4 L1585.8 531.4 L1586.9 542.7 L1588.0 537.2 L1589.1 544.9 L1590.2 541.5 L1591.3 542.9 L1592.4 547.9 L1593.5 545.9 L1594.6 542.3 L1595.7 542.0 L1596.8 535.6 L1597.9 547.2 L1599.0 543.2 L1600.1 539.9 L1601.2 554.0 L1602.3 543.3 L1603.4 551.5 L1604.5 546.8 L1605.6 549.2 L1606.7 548.1 L1607.8 546.4 L1608.9 541.6 L1610.0 544.3 L1611.1 543.3 L1612.2 551.9 L1613.3 551.4 L1614.4 550.3 L1615.5 549.6 L1616.6 547.4 L1617.7 550.3 L1618.8 522.0 L1619.9 546.0 L1621.0 549.5 L1622.1 549.9 L1623.2 551.9 L1624.3 553.0 L1625.4 550.1 L1626.5 552.6 L1627.6 547.5 L1628.7 553.5 L1629.8 555.9 L1630.9 556.1 L1632.0 550.2 L1633.1 554.4 L1634.2 554.6 L1635.3 562.3 L1636.4 553.0 L1637.5 559.2 L1638.6 553.7 L1639.7 554.1 L1640.8 553.0 L1641.9 558.9 L1643.0 552.1 L1644.1 564.2 L1645.2 554.0 L1646.3 562.5 L1647.4 557.9 L1648.5 550.4 L1649.6 555.0 L1650.7 562.8 L1651.8 550.4 L1652.9 558.6 L1654.0 565.7 L1655.1 562.5 L1656.2 560.3 L1657.3 561.0 L1658.4 560.1 L1659.5 571.6 L1660.6 565.9 L1661.7 560.9 L1662.8 565.1 L1663.9 558.5 L1665.0 563.9 L1666.1 560.9 L1667.2 570.5 L1668.3 571.6 L1669.4 569.8 L1670.5 566.2 L1671.6 565.0 L1672.7 567.7 L1673.8 566.2 L1674.9 565.4 L1676.0 571.7 L1677.1 572.9 L1678.2 574.0 L1679.3 568.9 L1680.4 569.5 L1681.5 568.1 L1682.6 567.3 L1683.7 563.4 L1684.8 562.5 L1685.9 574.5 L1687.0 573.0 L1688.1 573.9 L1689.2 571.5 L1690.3 574.2 L1691.4 573.7 L1692.5 566.1 L1693.6 572.2 L1694.7 571.9 L1695.8 542.0 L1696.9 579.2 L1698.0 575.5 L1699.1 571.9 L1700.2 567.4 L1701.3 550.0 L1702.4 577.2 L1703.5 574.5 L1704.6 580.8 L1705.7 583.3 L1706.8 568.7 L1707.9 578.6 L1709.0 577.5 L1710.1 579.2 L1711.2 582.1 L1712.3 571.1 L1713.4 571.0 L1714.5 583.1 L1715.6 579.8 L1716.7 573.2 L1717.8 581.1 L1718.9 578.8 L1720.0 578.9 L1721.1 570.6 L1722.2 579.7 L1723.3 581.2 L1724.4 576.6 L1725.5 582.6 L1726.6 576.6 L1727.7 581.9 L1728.8 579.1 L1729.9 579.9 L1731.0 579.2 L1732.1 581.4 L1733.2 576.3 L1734.3 579.5 L1735.4 575.8 L1736.5 576.1 L1737.6 576.9 L1738.7 582.3 L1739.8 575.7 L1740.9 579.7 L1742.0 580.9 L1743.1 574.7 L1744.2 578.7 L1745.3 579.0 L1746.4 584.3 L1747.5 576.4 L1748.6 577.8 L1749.7 582.8 L1750.8 590.5 L1751.9 581.5 L1753.0 582.3 L1754.1 592.6 L1755.2 579.6 L1756.3 589.8 L1757.4 589.9 L1758.5 588.5 L1759.6 581.7 L1760.7 581.6 L1761.8 577.1 L1762.9 586.0 L1764.0 585.5 L1765.1 571.0 L1766.2 584.7 L1767.3 588.1 L1768.4 575.1 L1769.5 581.6 L1770.6 584.7 L1771.7 585.9 L1772.8 589.4 L1773.9 583.4 L1775.0 584.3 L1776.1 592.1 L1777.2 586.1 L1778.3 585.6 L1779.4 585.7 L1780.5 586.5 L1781.6 589.0 L1782.7 584.9 L1783.8 588.2 L1784.9 591.2 L1786.0 591.1 L1787.1 587.7 L1788.2 586.4 L1789.3 592.8 L1790.4 589.6 L1791.5 586.4 L1792.6 586.4 L1793.7 585.9 L1794.8 585.5 L1795.9 594.8 L1797.0 585.0 L1798.1 583.0 L1799.2 559.0 L1800.3 588.1 L1801.4 579.0 L1802.5 587.9 L1803.6 587.2 L1804.7 590.3 L1805.8 590.4 L1806.9 592.7 L1808.0 586.0 L1809.1 587.5 L1810.2 591.7 L1811.3 592.5 L1812.4 591.9 L1813.5 584.5 L1814.6 588.9 L1815.7 587.9 L1816.8 582.4 L1817.9 590.3 L1819.0 590.5 L1820.1 590.1 L1821.2 590.5 L1822.3 589.1 L1823.4 590.4 L1824.5 591.6 L1825.6 591.1 L1826.7 592.1 L1827.8 593.1 L1828.9 594.2 L1830.0 589.2 L1831.1 590.5 L1832.2 590.1 L1833.3 591.0 L1834.4 586.8 L1835.5 593.7 L1836.6 586.2 L1837.7 594.9 L1838.8 591.9 L1839.9 590.4 L1841.0 591.1 L1842.1 584.3 L1843.2 592.8 L1844.3 594.9 L1845.4 599.7 L1846.5 598.6 L1847.6 588.1 L1848.7 595.7 L1849.8 584.5 L1850.9 588.0 L1852.0 586.4 L1853.1 583.8 L1854.2 590.2 L1855.3 591.4 L1856.4 590.1 L1857.5 590.1 L1858.6 594.0 L1859.7 596.5 L1860.8 592.3 L1861.9 596.4 L1863.0 594.3 L1864.1 590.7 L1865.2 588.5 L1866.3 593.0 L1867.4 598.7 L1868.5 592.9 L1869.6 593.8 L1870.7 597.8 L1871.8 597.2 L1872.9 591.9 L1874.0 591.2 L1875.1 599.6 L1876.2 597.7 L1877.3 599.4 L1878.4 587.2 L1879.500 594 L1879.500 672" fill="none" stroke="#dcdcdc" stroke-width="1.250" stroke-linejoin="round"/></svg>
<div class="t " style="left:272px;top:154px;font-size:10.500px;letter-spacing:-.300px;color:#f2f2f2;transform:translateY(.200px);">-5 dBm</div>
<div class="t " style="left:1876px;top:154px;font-size:10.500px;letter-spacing:-.300px;color:#f2f2f2;transform:translate(-100%,.200px);">-5 dBm</div>
<div class="t " style="left:272px;top:174px;font-size:10.500px;letter-spacing:-.300px;color:#f2f2f2;transform:translateY(.200px);">-10 dBm</div>
<div class="t " style="left:1876px;top:174px;font-size:10.500px;letter-spacing:-.300px;color:#f2f2f2;transform:translate(-100%,.200px);">-10 dBm</div>
<div class="t " style="left:272px;top:195px;font-size:10.500px;letter-spacing:-.300px;color:#f2f2f2;transform:translateY(.200px);">-15 dBm</div>
<div class="t " style="left:1876px;top:195px;font-size:10.500px;letter-spacing:-.300px;color:#f2f2f2;transform:translate(-100%,.200px);">-15 dBm</div>
<div class="t " style="left:272px;top:215px;font-size:10.500px;letter-spacing:-.300px;color:#f2f2f2;transform:translateY(.200px);">-20 dBm</div>
<div class="t " style="left:1876px;top:215px;font-size:10.500px;letter-spacing:-.300px;color:#f2f2f2;transform:translate(-100%,.200px);">-20 dBm</div>
<div class="t " style="left:272px;top:236px;font-size:10.500px;letter-spacing:-.300px;color:#f2f2f2;transform:translateY(.200px);">-25 dBm</div>
<div class="t " style="left:1876px;top:236px;font-size:10.500px;letter-spacing:-.300px;color:#f2f2f2;transform:translate(-100%,.200px);">-25 dBm</div>
<div class="t " style="left:272px;top:256px;font-size:10.500px;letter-spacing:-.300px;color:#f2f2f2;transform:translateY(.200px);">-30 dBm</div>
<div class="t " style="left:1876px;top:256px;font-size:10.500px;letter-spacing:-.300px;color:#f2f2f2;transform:translate(-100%,.200px);">-30 dBm</div>
<div class="t " style="left:272px;top:276px;font-size:10.500px;letter-spacing:-.300px;color:#f2f2f2;transform:translateY(.200px);">-35 dBm</div>
<div class="t " style="left:1876px;top:276px;font-size:10.500px;letter-spacing:-.300px;color:#f2f2f2;transform:translate(-100%,.200px);">-35 dBm</div>
<div class="t " style="left:272px;top:297px;font-size:10.500px;letter-spacing:-.300px;color:#f2f2f2;transform:translateY(.200px);">-40 dBm</div>
<div class="t " style="left:1876px;top:297px;font-size:10.500px;letter-spacing:-.300px;color:#f2f2f2;transform:translate(-100%,.200px);">-40 dBm</div>
<div class="t " style="left:272px;top:317px;font-size:10.500px;letter-spacing:-.300px;color:#f2f2f2;transform:translateY(.200px);">-45 dBm</div>
<div class="t " style="left:1876px;top:317px;font-size:10.500px;letter-spacing:-.300px;color:#f2f2f2;transform:translate(-100%,.200px);">-45 dBm</div>
<div class="t " style="left:272px;top:337px;font-size:10.500px;letter-spacing:-.300px;color:#f2f2f2;transform:translateY(.200px);">-50 dBm</div>
<div class="t " style="left:1876px;top:337px;font-size:10.500px;letter-spacing:-.300px;color:#f2f2f2;transform:translate(-100%,.200px);">-50 dBm</div>
<div class="t " style="left:272px;top:358px;font-size:10.500px;letter-spacing:-.300px;color:#f2f2f2;transform:translateY(.200px);">-55 dBm</div>
<div class="t " style="left:1876px;top:358px;font-size:10.500px;letter-spacing:-.300px;color:#f2f2f2;transform:translate(-100%,.200px);">-55 dBm</div>
<div class="t " style="left:272px;top:378px;font-size:10.500px;letter-spacing:-.300px;color:#f2f2f2;transform:translateY(.200px);">-60 dBm</div>
<div class="t " style="left:1876px;top:378px;font-size:10.500px;letter-spacing:-.300px;color:#f2f2f2;transform:translate(-100%,.200px);">-60 dBm</div>
<div class="t " style="left:272px;top:398px;font-size:10.500px;letter-spacing:-.300px;color:#f2f2f2;transform:translateY(.200px);">-65 dBm</div>
<div class="t " style="left:1876px;top:398px;font-size:10.500px;letter-spacing:-.300px;color:#f2f2f2;transform:translate(-100%,.200px);">-65 dBm</div>
<div class="t " style="left:272px;top:419px;font-size:10.500px;letter-spacing:-.300px;color:#f2f2f2;transform:translateY(.200px);">-70 dBm</div>
<div class="t " style="left:1876px;top:419px;font-size:10.500px;letter-spacing:-.300px;color:#f2f2f2;transform:translate(-100%,.200px);">-70 dBm</div>
<div class="t " style="left:272px;top:439px;font-size:10.500px;letter-spacing:-.300px;color:#f2f2f2;transform:translateY(.200px);">-75 dBm</div>
<div class="t " style="left:1876px;top:439px;font-size:10.500px;letter-spacing:-.300px;color:#f2f2f2;transform:translate(-100%,.200px);">-75 dBm</div>
<div class="t " style="left:272px;top:459px;font-size:10.500px;letter-spacing:-.300px;color:#f2f2f2;transform:translateY(.200px);">-80 dBm</div>
<div class="t " style="left:1876px;top:459px;font-size:10.500px;letter-spacing:-.300px;color:#f2f2f2;transform:translate(-100%,.200px);">-80 dBm</div>
<div class="t " style="left:272px;top:480px;font-size:10.500px;letter-spacing:-.300px;color:#f2f2f2;transform:translateY(.200px);">-85 dBm</div>
<div class="t " style="left:1876px;top:480px;font-size:10.500px;letter-spacing:-.300px;color:#f2f2f2;transform:translate(-100%,.200px);">-85 dBm</div>
<div class="t " style="left:272px;top:500px;font-size:10.500px;letter-spacing:-.300px;color:#f2f2f2;transform:translateY(.200px);">-90 dBm</div>
<div class="t " style="left:1876px;top:500px;font-size:10.500px;letter-spacing:-.300px;color:#f2f2f2;transform:translate(-100%,.200px);">-90 dBm</div>
<div class="t " style="left:272px;top:520px;font-size:10.500px;letter-spacing:-.300px;color:#f2f2f2;transform:translateY(.200px);">-95 dBm</div>
<div class="t " style="left:1876px;top:520px;font-size:10.500px;letter-spacing:-.300px;color:#f2f2f2;transform:translate(-100%,.200px);">-95 dBm</div>
<div class="t " style="left:272px;top:541px;font-size:10.500px;letter-spacing:-.300px;color:#f2f2f2;transform:translateY(.200px);">-100 dBm</div>
<div class="t " style="left:1876px;top:541px;font-size:10.500px;letter-spacing:-.300px;color:#f2f2f2;transform:translate(-100%,.200px);">-100 dBm</div>
<div class="t " style="left:272px;top:561px;font-size:10.500px;letter-spacing:-.300px;color:#f2f2f2;transform:translateY(.200px);">-105 dBm</div>
<div class="t " style="left:1876px;top:561px;font-size:10.500px;letter-spacing:-.300px;color:#f2f2f2;transform:translate(-100%,.200px);">-105 dBm</div>
<div class="t " style="left:272px;top:581px;font-size:10.500px;letter-spacing:-.300px;color:#f2f2f2;transform:translateY(.200px);">-110 dBm</div>
<div class="t " style="left:1876px;top:581px;font-size:10.500px;letter-spacing:-.300px;color:#f2f2f2;transform:translate(-100%,.200px);">-110 dBm</div>
<div class="t " style="left:272px;top:602px;font-size:10.500px;letter-spacing:-.300px;color:#f2f2f2;transform:translateY(.200px);">-115 dBm</div>
<div class="t " style="left:1876px;top:602px;font-size:10.500px;letter-spacing:-.300px;color:#f2f2f2;transform:translate(-100%,.200px);">-115 dBm</div>
<div class="t " style="left:272px;top:622px;font-size:10.500px;letter-spacing:-.300px;color:#f2f2f2;transform:translateY(.200px);">-120 dBm</div>
<div class="t " style="left:1876px;top:622px;font-size:10.500px;letter-spacing:-.300px;color:#f2f2f2;transform:translate(-100%,.200px);">-120 dBm</div>
<div class="t " style="left:272px;top:642px;font-size:10.500px;letter-spacing:-.300px;color:#f2f2f2;transform:translateY(.200px);">-125 dBm</div>
<div class="t " style="left:1876px;top:642px;font-size:10.500px;letter-spacing:-.300px;color:#f2f2f2;transform:translate(-100%,.200px);">-125 dBm</div>
<div class="a" style="left:1163px;top:158px;width:15px;height:15px;background:#064206;border-radius:2px;"></div>
<div class="t c" style="left:1170.5px;top:161px;font-size:9.500px;color:#f2f2f2;">1</div>
<div class="t mono" style="left:339.2px;top:155.5px;font-size:20.600px;color:#fff;transform-origin:0 82%;transform:scaleY(1.060);">-62</div>
<div class="t mono" style="left:382px;top:161.5px;font-size:12px;color:#f4f4f4;">dBm</div>
<div class="a" style="left:411px;top:151px;width:110px;height:8px;background:linear-gradient(90deg,#2c2c2c 0,#5c5a2c 25%,#b0a418 50%,#ffee00 72%,#ffa000 88%,#f07000 100%);"></div>
<div class="a" style="left:518.2px;top:151.4px;width:7px;height:7px;background:#ffee30;border-radius:50%;"></div>
<div class="a" style="left:411px;top:164px;width:200px;height:1px;background:#e02020;"></div>
<div class="t c mono" style="left:439.3px;top:169px;font-size:8.500px;font-weight:bold;color:#f4f4f4;">-120</div>
<div class="a" style="left:439px;top:165px;width:1px;height:1px;background:#e02020;"></div>
<div class="t c mono" style="left:468.3px;top:169px;font-size:8.500px;font-weight:bold;color:#f4f4f4;">-100</div>
<div class="a" style="left:468px;top:165px;width:1px;height:1px;background:#e02020;"></div>
<div class="t c mono" style="left:496.3px;top:169px;font-size:8.500px;font-weight:bold;color:#f4f4f4;">-80</div>
<div class="a" style="left:496px;top:165px;width:1px;height:1px;background:#e02020;"></div>
<div class="t c mono" style="left:525px;top:169px;font-size:8.500px;font-weight:bold;color:#f4f4f4;">-60</div>
<div class="a" style="left:525px;top:165px;width:1px;height:1px;background:#e02020;"></div>
<div class="t c mono" style="left:553.3px;top:169px;font-size:8.500px;font-weight:bold;color:#f4f4f4;">-40</div>
<div class="a" style="left:553px;top:165px;width:1px;height:1px;background:#e02020;"></div>
<div class="t c mono" style="left:582px;top:169px;font-size:8.500px;font-weight:bold;color:#f4f4f4;">-20</div>
<div class="a" style="left:582px;top:165px;width:1px;height:1px;background:#e02020;"></div>
<svg class="a" style="left:268px;top:672px" width="1612" height="21" viewBox="268 672 1612 21"><defs><linearGradient id="gfa" x1="0" y1="0" x2="0" y2="1"><stop offset="0" stop-color="#666"/><stop offset=".5" stop-color="#444"/><stop offset="1" stop-color="#1c1c1c"/></linearGradient></defs><rect x="268" y="672" width="1612" height="11" fill="url(#gfa)"/><rect x="268" y="683" width="1612" height="10" fill="#000"/><rect x="275" y="672.500" width="2" height="2" fill="#939393"/><rect x="283" y="672.500" width="2" height="4.5" fill="#939393"/><rect x="291" y="672.500" width="2" height="2" fill="#939393"/><rect x="299" y="672.500" width="2" height="3" fill="#939393"/><rect x="307" y="672.500" width="2" height="2" fill="#939393"/><rect x="315" y="672.500" width="2" height="3" fill="#939393"/><rect x="323" y="672.500" width="2" height="2" fill="#939393"/><rect x="331" y="672.500" width="2" height="3" fill="#939393"/><rect x="339" y="672.500" width="2" height="2" fill="#939393"/><rect x="347" y="672.500" width="2" height="3" fill="#939393"/><rect x="355" y="672.500" width="2" height="2" fill="#939393"/><rect x="363" y="672.500" width="2" height="4.5" fill="#939393"/><rect x="371" y="672.500" width="2" height="2" fill="#939393"/><rect x="379" y="672.500" width="2" height="3" fill="#939393"/><rect x="387" y="672.500" width="2" height="2" fill="#939393"/><rect x="396" y="672.500" width="2" height="3" fill="#939393"/><rect x="404" y="672.500" width="2" height="2" fill="#939393"/><rect x="412" y="672.500" width="2" height="3" fill="#939393"/><rect x="420" y="672.500" width="2" height="2" fill="#939393"/><rect x="428" y="672.500" width="2" height="3" fill="#939393"/><rect x="436" y="672.500" width="2" height="2" fill="#939393"/><rect x="444" y="672.500" width="2" height="4.5" fill="#939393"/><rect x="452" y="672.500" width="2" height="2" fill="#939393"/><rect x="460" y="672.500" width="2" height="3" fill="#939393"/><rect x="468" y="672.500" width="2" height="2" fill="#939393"/><rect x="476" y="672.500" width="2" height="3" fill="#939393"/><rect x="484" y="672.500" width="2" height="2" fill="#939393"/><rect x="492" y="672.500" width="2" height="3" fill="#939393"/><rect x="500" y="672.500" width="2" height="2" fill="#939393"/><rect x="508" y="672.500" width="2" height="3" fill="#939393"/><rect x="516" y="672.500" width="2" height="2" fill="#939393"/><rect x="525" y="672.500" width="2" height="4.5" fill="#939393"/><rect x="533" y="672.500" width="2" height="2" fill="#939393"/><rect x="541" y="672.500" width="2" height="3" fill="#939393"/><rect x="549" y="672.500" width="2" height="2" fill="#939393"/><rect x="557" y="672.500" width="2" height="3" fill="#939393"/><rect x="565" y="672.500" width="2" height="2" fill="#939393"/><rect x="573" y="672.500" width="2" height="3" fill="#939393"/><rect x="581" y="672.500" width="2" height="2" fill="#939393"/><rect x="589" y="672.500" width="2" height="3" fill="#939393"/><rect x="597" y="672.500" width="2" height="2" fill="#939393"/><rect x="605" y="672.500" width="2" height="4.5" fill="#939393"/><rect x="613" y="672.500" width="2" height="2" fill="#939393"/><rect x="621" y="672.500" width="2" height="3" fill="#939393"/><rect x="629" y="672.500" width="2" height="2" fill="#939393"/><rect x="637" y="672.500" width="2" height="3" fill="#939393"/><rect x="645" y="672.500" width="2" height="2" fill="#939393"/><rect x="653" y="672.500" width="2" height="3" fill="#939393"/><rect x="662" y="672.500" width="2" height="2" fill="#939393"/><rect x="670" y="672.500" width="2" height="3" fill="#939393"/><rect x="678" y="672.500" width="2" height="2" fill="#939393"/><rect x="686" y="672.500" width="2" height="4.5" fill="#939393"/><rect x="694" y="672.500" width="2" height="2" fill="#939393"/><rect x="702" y="672.500" width="2" height="3" fill="#939393"/><rect x="710" y="672.500" width="2" height="2" fill="#939393"/><rect x="718" y="672.500" width="2" height="3" fill="#939393"/><rect x="726" y="672.500" width="2" height="2" fill="#939393"/><rect x="734" y="672.500" width="2" height="3" fill="#939393"/><rect x="742" y="672.500" width="2" height="2" fill="#939393"/><rect x="750" y="672.500" width="2" height="3" fill="#939393"/><rect x="758" y="672.500" width="2" height="2" fill="#939393"/><rect x="766" y="672.500" width="2" height="4.5" fill="#939393"/><rect x="774" y="672.500" width="2" height="2" fill="#939393"/><rect x="782" y="672.500" width="2" height="3" fill="#939393"/><rect x="790" y="672.500" width="2" height="2" fill="#939393"/><rect x="799" y="672.500" width="2" height="3" fill="#939393"/><rect x="807" y="672.500" width="2" height="2" fill="#939393"/><rect x="815" y="672.500" width="2" height="3" fill="#939393"/><rect x="823" y="672.500" width="2" height="2" fill="#939393"/><rect x="831" y="672.500" width="2" height="3" fill="#939393"/><rect x="839" y="672.500" width="2" height="2" fill="#939393"/><rect x="847" y="672.500" width="2" height="4.5" fill="#939393"/><rect x="855" y="672.500" width="2" height="2" fill="#939393"/><rect x="863" y="672.500" width="2" height="3" fill="#939393"/><rect x="871" y="672.500" width="2" height="2" fill="#939393"/><rect x="879" y="672.500" width="2" height="3" fill="#939393"/><rect x="887" y="672.500" width="2" height="2" fill="#939393"/><rect x="895" y="672.500" width="2" height="3" fill="#939393"/><rect x="903" y="672.500" width="2" height="2" fill="#939393"/><rect x="911" y="672.500" width="2" height="3" fill="#939393"/><rect x="919" y="672.500" width="2" height="2" fill="#939393"/><rect x="928" y="672.500" width="2" height="4.5" fill="#939393"/><rect x="936" y="672.500" width="2" height="2" fill="#939393"/><rect x="944" y="672.500" width="2" height="3" fill="#939393"/><rect x="952" y="672.500" width="2" height="2" fill="#939393"/><rect x="960" y="672.500" width="2" height="3" fill="#939393"/><rect x="968" y="672.500" width="2" height="2" fill="#939393"/><rect x="976" y="672.500" width="2" height="3" fill="#939393"/><rect x="984" y="672.500" width="2" height="2" fill="#939393"/><rect x="992" y="672.500" width="2" height="3" fill="#939393"/><rect x="1000" y="672.500" width="2" height="2" fill="#939393"/><rect x="1008" y="672.500" width="2" height="4.5" fill="#939393"/><rect x="1016" y="672.500" width="2" height="2" fill="#939393"/><rect x="1024" y="672.500" width="2" height="3" fill="#939393"/><rect x="1032" y="672.500" width="2" height="2" fill="#939393"/><rect x="1040" y="672.500" width="2" height="3" fill="#939393"/><rect x="1048" y="672.500" width="2" height="2" fill="#939393"/><rect x="1056" y="672.500" width="2" height="3" fill="#939393"/><rect x="1065" y="672.500" width="2" height="2" fill="#939393"/><rect x="1073" y="672.500" width="2" height="3" fill="#939393"/><rect x="1081" y="672.500" width="2" height="2" fill="#939393"/><rect x="1089" y="672.500" width="2" height="4.5" fill="#939393"/><rect x="1097" y="672.500" width="2" height="2" fill="#939393"/><rect x="1105" y="672.500" width="2" height="3" fill="#939393"/><rect x="1113" y="672.500" width="2" height="2" fill="#939393"/><rect x="1121" y="672.500" width="2" height="3" fill="#939393"/><rect x="1129" y="672.500" width="2" height="2" fill="#939393"/><rect x="1137" y="672.500" width="2" height="3" fill="#939393"/><rect x="1145" y="672.500" width="2" height="2" fill="#939393"/><rect x="1153" y="672.500" width="2" height="3" fill="#939393"/><rect x="1161" y="672.500" width="2" height="2" fill="#939393"/><rect x="1169" y="672.500" width="2" height="4.5" fill="#939393"/><rect x="1177" y="672.500" width="2" height="2" fill="#939393"/><rect x="1185" y="672.500" width="2" height="3" fill="#939393"/><rect x="1193" y="672.500" width="2" height="2" fill="#939393"/><rect x="1202" y="672.500" width="2" height="3" fill="#939393"/><rect x="1210" y="672.500" width="2" height="2" fill="#939393"/><rect x="1218" y="672.500" width="2" height="3" fill="#939393"/><rect x="1226" y="672.500" width="2" height="2" fill="#939393"/><rect x="1234" y="672.500" width="2" height="3" fill="#939393"/><rect x="1242" y="672.500" width="2" height="2" fill="#939393"/><rect x="1250" y="672.500" width="2" height="4.5" fill="#939393"/><rect x="1258" y="672.500" width="2" height="2" fill="#939393"/><rect x="1266" y="672.500" width="2" height="3" fill="#939393"/><rect x="1274" y="672.500" width="2" height="2" fill="#939393"/><rect x="1282" y="672.500" width="2" height="3" fill="#939393"/><rect x="1290" y="672.500" width="2" height="2" fill="#939393"/><rect x="1298" y="672.500" width="2" height="3" fill="#939393"/><rect x="1306" y="672.500" width="2" height="2" fill="#939393"/><rect x="1314" y="672.500" width="2" height="3" fill="#939393"/><rect x="1322" y="672.500" width="2" height="2" fill="#939393"/><rect x="1331" y="672.500" width="2" height="4.5" fill="#939393"/><rect x="1339" y="672.500" width="2" height="2" fill="#939393"/><rect x="1347" y="672.500" width="2" height="3" fill="#939393"/><rect x="1355" y="672.500" width="2" height="2" fill="#939393"/><rect x="1363" y="672.500" width="2" height="3" fill="#939393"/><rect x="1371" y="672.500" width="2" height="2" fill="#939393"/><rect x="1379" y="672.500" width="2" height="3" fill="#939393"/><rect x="1387" y="672.500" width="2" height="2" fill="#939393"/><rect x="1395" y="672.500" width="2" height="3" fill="#939393"/><rect x="1403" y="672.500" width="2" height="2" fill="#939393"/><rect x="1411" y="672.500" width="2" height="4.5" fill="#939393"/><rect x="1419" y="672.500" width="2" height="2" fill="#939393"/><rect x="1427" y="672.500" width="2" height="3" fill="#939393"/><rect x="1435" y="672.500" width="2" height="2" fill="#939393"/><rect x="1443" y="672.500" width="2" height="3" fill="#939393"/><rect x="1451" y="672.500" width="2" height="2" fill="#939393"/><rect x="1459" y="672.500" width="2" height="3" fill="#939393"/><rect x="1468" y="672.500" width="2" height="2" fill="#939393"/><rect x="1476" y="672.500" width="2" height="3" fill="#939393"/><rect x="1484" y="672.500" width="2" height="2" fill="#939393"/><rect x="1492" y="672.500" width="2" height="4.5" fill="#939393"/><rect x="1500" y="672.500" width="2" height="2" fill="#939393"/><rect x="1508" y="672.500" width="2" height="3" fill="#939393"/><rect x="1516" y="672.500" width="2" height="2" fill="#939393"/><rect x="1524" y="672.500" width="2" height="3" fill="#939393"/><rect x="1532" y="672.500" width="2" height="2" fill="#939393"/><rect x="1540" y="672.500" width="2" height="3" fill="#939393"/><rect x="1548" y="672.500" width="2" height="2" fill="#939393"/><rect x="1556" y="672.500" width="2" height="3" fill="#939393"/><rect x="1564" y="672.500" width="2" height="2" fill="#939393"/><rect x="1572" y="672.500" width="2" height="4.5" fill="#939393"/><rect x="1580" y="672.500" width="2" height="2" fill="#939393"/><rect x="1588" y="672.500" width="2" height="3" fill="#939393"/><rect x="1596" y="672.500" width="2" height="2" fill="#939393"/><rect x="1605" y="672.500" width="2" height="3" fill="#939393"/><rect x="1613" y="672.500" width="2" height="2" fill="#939393"/><rect x="1621" y="672.500" width="2" height="3" fill="#939393"/><rect x="1629" y="672.500" width="2" height="2" fill="#939393"/><rect x="1637" y="672.500" width="2" height="3" fill="#939393"/><rect x="1645" y="672.500" width="2" height="2" fill="#939393"/><rect x="1653" y="672.500" width="2" height="4.5" fill="#939393"/><rect x="1661" y="672.500" width="2" height="2" fill="#939393"/><rect x="1669" y="672.500" width="2" height="3" fill="#939393"/><rect x="1677" y="672.500" width="2" height="2" fill="#939393"/><rect x="1685" y="672.500" width="2" height="3" fill="#939393"/><rect x="1693" y="672.500" width="2" height="2" fill="#939393"/><rect x="1701" y="672.500" width="2" height="3" fill="#939393"/><rect x="1709" y="672.500" width="2" height="2" fill="#939393"/><rect x="1717" y="672.500" width="2" height="3" fill="#939393"/><rect x="1725" y="672.500" width="2" height="2" fill="#939393"/><rect x="1734" y="672.500" width="2" height="4.5" fill="#939393"/><rect x="1742" y="672.500" width="2" height="2" fill="#939393"/><rect x="1750" y="672.500" width="2" height="3" fill="#939393"/><rect x="1758" y="672.500" width="2" height="2" fill="#939393"/><rect x="1766" y="672.500" width="2" height="3" fill="#939393"/><rect x="1774" y="672.500" width="2" height="2" fill="#939393"/><rect x="1782" y="672.500" width="2" height="3" fill="#939393"/><rect x="1790" y="672.500" width="2" height="2" fill="#939393"/><rect x="1798" y="672.500" width="2" height="3" fill="#939393"/><rect x="1806" y="672.500" width="2" height="2" fill="#939393"/><rect x="1814" y="672.500" width="2" height="4.5" fill="#939393"/><rect x="1822" y="672.500" width="2" height="2" fill="#939393"/><rect x="1830" y="672.500" width="2" height="3" fill="#939393"/><rect x="1838" y="672.500" width="2" height="2" fill="#939393"/><rect x="1846" y="672.500" width="2" height="3" fill="#939393"/><rect x="1854" y="672.500" width="2" height="2" fill="#939393"/><rect x="1862" y="672.500" width="2" height="3" fill="#939393"/><rect x="1871" y="672.500" width="2" height="2" fill="#939393"/><rect x="1879" y="672.500" width="2" height="3" fill="#939393"/></svg>
<div class="t c" style="left:284px;top:681px;font-size:9.800px;color:#fff;">433.450</div>
<div class="t c" style="left:364px;top:681px;font-size:9.800px;color:#fff;">433.500</div>
<div class="t c" style="left:445px;top:681px;font-size:9.800px;color:#fff;">433.550</div>
<div class="t c" style="left:526px;top:681px;font-size:9.800px;color:#fff;">433.600</div>
<div class="t c" style="left:606px;top:681px;font-size:9.800px;color:#fff;">433.650</div>
<div class="t c" style="left:687px;top:681px;font-size:9.800px;color:#fff;">433.700</div>
<div class="t c" style="left:767px;top:681px;font-size:9.800px;color:#fff;">433.750</div>
<div class="t c" style="left:848px;top:681px;font-size:9.800px;color:#fff;">433.800</div>
<div class="t c" style="left:929px;top:681px;font-size:9.800px;color:#fff;">433.850</div>
<div class="t c" style="left:1009px;top:681px;font-size:9.800px;color:#fff;">433.900</div>
<div class="t c" style="left:1090px;top:681px;font-size:9.800px;color:#fff;">433.950</div>
<div class="t c" style="left:1170px;top:681px;font-size:9.800px;color:#fff;">434.000</div>
<div class="t c" style="left:1251px;top:681px;font-size:9.800px;color:#fff;">434.050</div>
<div class="t c" style="left:1332px;top:681px;font-size:9.800px;color:#fff;">434.100</div>
<div class="t c" style="left:1412px;top:681px;font-size:9.800px;color:#fff;">434.150</div>
<div class="t c" style="left:1493px;top:681px;font-size:9.800px;color:#fff;">434.200</div>
<div class="t c" style="left:1573px;top:681px;font-size:9.800px;color:#fff;">434.250</div>
<div class="t c" style="left:1654px;top:681px;font-size:9.800px;color:#fff;">434.300</div>
<div class="t c" style="left:1735px;top:681px;font-size:9.800px;color:#fff;">434.350</div>
<div class="t c" style="left:1815px;top:681px;font-size:9.800px;color:#fff;">434.400</div>
<div class="a" style="left:264px;top:672px;width:4px;height:21px;background:#e9ebfa;"></div>
<div class="a" style="left:268px;top:693px;width:1612px;height:6px;background:#f0f0f0;"></div>
<div class="a" style="left:1043px;top:695px;width:63px;height:2px;background:repeating-linear-gradient(90deg,#555 0,#555 2px,transparent 2px,transparent 4px);"></div>
<div class="a" style="left:268px;top:699px;width:1612px;height:297px;background:linear-gradient(90deg,#02021e 0px,#02021f 292px,#030426 372px,#04062c 532px,#080c3a 592px,#080c3a 637px,#05082e 647px,#060a32 717px,#101c58 732px,#223880 768px,#304ca4 792px,#3c5cc0 824px,#5e88ec 828px,#6a94f6 862px,#6e98fa 901px,#88b0ff 903px,#8ab2ff 932px,#7ea8ff 949px,#5c84e8 964px,#4264cc 988px,#3050b0 1018px,#22388a 1044px,#101a54 1068px,#080e3a 1088px,#070c36 1127px,#090f3e 1184px,#080d3a 1232px,#050830 1262px,#030426 1302px,#02031f 1372px,#02021e 1612px);"></div>
<svg class="a" style="left:268px;top:699px" width="1612" height="297" viewBox="268 699 1612 297"><defs><linearGradient id="hs" x1="0" y1="0" x2="1" y2="0"><stop offset="0" stop-color="#0a1450" stop-opacity="0"/><stop offset=".17" stop-color="#0c1858" stop-opacity=".5"/><stop offset=".3" stop-color="#0a1450" stop-opacity="0"/><stop offset=".62" stop-color="#0a1450" stop-opacity="0"/><stop offset=".78" stop-color="#0c1858" stop-opacity=".55"/><stop offset="1" stop-color="#0a1450" stop-opacity="0"/></linearGradient><filter id="nz" x="0" y="0" width="100%" height="100%"><feTurbulence type="fractalNoise" baseFrequency=".9" numOctaves="2" seed="3" result="n"/><feColorMatrix type="matrix" values="0 0 0 0 .55  0 0 0 0 .65  0 0 0 0 1  0 0 0 1.6 -0.55"/></filter><filter id="nd" x="0" y="0" width="100%" height="100%"><feTurbulence type="fractalNoise" baseFrequency=".85" numOctaves="2" seed="9"/><feColorMatrix type="matrix" values="0 0 0 0 0  0 0 0 0 0  0 0 0 0 .1  0 0 0 1.1 -0.4"/></filter><linearGradient id="nm" x1="0" y1="0" x2="1" y2="0"><stop offset="0" stop-color="#fff" stop-opacity=".01"/><stop offset=".3" stop-color="#fff" stop-opacity=".02"/><stop offset=".417" stop-color="#fff" stop-opacity=".04"/><stop offset=".454" stop-color="#fff" stop-opacity=".2"/><stop offset=".513" stop-color="#fff" stop-opacity=".45"/><stop offset=".603" stop-color="#fff" stop-opacity=".45"/><stop offset=".665" stop-color="#fff" stop-opacity=".2"/><stop offset=".7" stop-color="#fff" stop-opacity=".04"/><stop offset=".8" stop-color="#fff" stop-opacity=".02"/><stop offset="1" stop-color="#fff" stop-opacity=".01"/></linearGradient><mask id="mk"><rect x="268" y="699" width="1612" height="297" fill="url(#nm)"/></mask></defs><filter id="blm" x="-20%" y="-40%" width="140%" height="180%"><feGaussianBlur stdDeviation="9 3"/></filter><rect x="930" y="728" width="70" height="14" fill="#02031e" opacity="0.8" filter="url(#blm)"/><rect x="925" y="760" width="60" height="8" fill="#02031e" opacity="0.5" filter="url(#blm)"/><rect x="930" y="783" width="75" height="12" fill="#02031e" opacity="0.7" filter="url(#blm)"/><rect x="925" y="838" width="70" height="16" fill="#02031e" opacity="0.75" filter="url(#blm)"/><rect x="930" y="880" width="70" height="14" fill="#02031e" opacity="0.7" filter="url(#blm)"/><rect x="925" y="915" width="60" height="10" fill="#02031e" opacity="0.5" filter="url(#blm)"/><rect x="930" y="950" width="70" height="12" fill="#02031e" opacity="0.6" filter="url(#blm)"/><rect x="1335" y="728" width="80" height="14" fill="#02031e" opacity="0.8" filter="url(#blm)"/><rect x="1340" y="765" width="70" height="10" fill="#02031e" opacity="0.6" filter="url(#blm)"/><rect x="1335" y="800" width="80" height="10" fill="#02031e" opacity="0.6" filter="url(#blm)"/><rect x="1335" y="838" width="80" height="16" fill="#02031e" opacity="0.75" filter="url(#blm)"/><rect x="1340" y="880" width="70" height="12" fill="#02031e" opacity="0.65" filter="url(#blm)"/><rect x="1335" y="925" width="80" height="12" fill="#02031e" opacity="0.6" filter="url(#blm)"/><rect x="1340" y="960" width="70" height="10" fill="#02031e" opacity="0.6" filter="url(#blm)"/><g mask="url(#mk)"><rect x="268" y="699" width="1612" height="297" filter="url(#nz)"/><rect x="268" y="699" width="1612" height="297" filter="url(#nd)"/></g><rect x="1030" y="738" width="290" height="4" fill="url(#hs)" opacity="0.50"/><rect x="1030" y="752" width="290" height="3" fill="url(#hs)" opacity="0.72"/><rect x="1030" y="768" width="290" height="4" fill="url(#hs)" opacity="0.66"/><rect x="1030" y="800" width="290" height="4" fill="url(#hs)" opacity="0.41"/><rect x="1030" y="815" width="290" height="3" fill="url(#hs)" opacity="0.71"/><rect x="1030" y="850" width="290" height="2" fill="url(#hs)" opacity="0.66"/><rect x="1030" y="870" width="290" height="2" fill="url(#hs)" opacity="0.45"/><rect x="1030" y="895" width="290" height="3" fill="url(#hs)" opacity="0.75"/><rect x="1030" y="905" width="290" height="3" fill="url(#hs)" opacity="0.62"/><rect x="1030" y="930" width="290" height="4" fill="url(#hs)" opacity="0.50"/><rect x="1030" y="948" width="290" height="4" fill="url(#hs)" opacity="0.49"/><rect x="1030" y="962" width="290" height="3" fill="url(#hs)" opacity="0.47"/><path d="M634.5 699V996" stroke="#2a3a90" stroke-width="1" opacity="0.3"/><path d="M691.5 699V996" stroke="#34469c" stroke-width="1" opacity="0.4"/><path d="M696.5 699V996" stroke="#3c52b4" stroke-width="1" opacity="0.75"/><path d="M773.5 699V996" stroke="#3c52b4" stroke-width="1" opacity="0.75"/><path d="M836.5 699V996" stroke="#2c3c96" stroke-width="1" opacity="0.4"/><path d="M850.5 699V996" stroke="#3448a8" stroke-width="1" opacity="0.5"/><path d="M875.5 699V996" stroke="#2c3c96" stroke-width="1" opacity="0.4"/><path d="M880.5 699V996" stroke="#2c3c96" stroke-width="1" opacity="0.4"/><path d="M893.5 699V996" stroke="#4a62c8" stroke-width="1" opacity="0.6"/><path d="M934.5 699V996" stroke="#2c3c96" stroke-width="1" opacity="0.3"/><path d="M1000.5 699V996" stroke="#4a66d0" stroke-width="1" opacity="0.25"/><path d="M1037.5 699V996" stroke="#5a78e0" stroke-width="1" opacity="0.3"/><path d="M1094.5 699V996" stroke="#86a8ff" stroke-width="1" opacity="0.3"/><path d="M1296.5 699V996" stroke="#6c8cf0" stroke-width="1" opacity="0.4"/><path d="M1388.5 699V996" stroke="#2c3c96" stroke-width="1" opacity="0.35"/><path d="M1403.5 699V996" stroke="#2c3c96" stroke-width="1" opacity="0.35"/><path d="M1427.5 699V996" stroke="#2c3c96" stroke-width="1" opacity="0.35"/><path d="M1440.5 699V996" stroke="#3c52b4" stroke-width="1" opacity="0.45"/><path d="M1484.5 699V996" stroke="#2c3c96" stroke-width="1" opacity="0.4"/><path d="M1497.5 699V996" stroke="#3c52b4" stroke-width="1" opacity="0.65"/><path d="M1619.5 699V996" stroke="#222e80" stroke-width="1" opacity="0.3"/><path d="M888.5 701V994" stroke="#58d058" stroke-width="1" stroke-dasharray="2 2"/><path d="M1452.5 701V994" stroke="#58d058" stroke-width="1" stroke-dasharray="2 2"/><path d="M1170.500 701V994" stroke="#1a4a2a" stroke-width="1" stroke-dasharray="3 2"/><path d="M888.500 699v3M1170.500 699v3M1452.500 699v3" stroke="#60e060" stroke-width="1"/></svg>
<div class="a" style="left:279px;top:757px;width:366px;height:229px;background:rgba(0,0,2,.78);border-radius:7px;"></div>
<div class="t mono" style="left:424px;top:765px;font-size:14px;color:#f4f4f4;">434.0</div>
<div class="t mono" style="left:489px;top:765px;font-size:14px;color:#f4f4f4;">&ndash;</div>
<div class="a" style="left:978px;top:928px;width:192px;height:58px;background:rgba(8,12,34,.86);border-radius:6px;"></div>
<div class="t mono" style="left:987px;top:938px;font-size:13.700px;color:#f4f4f4;">Freq: 433.940.075 MHz</div>
<div class="t mono" style="left:987px;top:961px;font-size:13.700px;color:#f4f4f4;">Span:</div>
<div class="t r mono" style="left:1160px;top:961px;font-size:13.700px;color:#f4f4f4;">&plusmn;500 kHz</div>
<div class="a" style="left:268px;top:996px;width:1612px;height:27px;background:#000;"></div>
<div class="a" style="left:295px;top:997px;width:1467px;height:13px;background:linear-gradient(#484848,#202020);"></div>
<div class="a" style="left:881px;top:997px;width:295px;height:26px;background:linear-gradient(#6c6c6c 0,#484848 25%,#2c2c2c 50%,#363636 100%);border-left:1px solid #b8b8b8;border-right:1px solid #b8b8b8;"></div>
<div class="a" style="left:882px;top:1003px;width:293px;height:20px;background:radial-gradient(ellipse 135px 13px at 146px 21px,#9c9400 0,#857f00 40%,rgba(105,101,0,.45) 70%,rgba(90,90,0,0) 100%);"></div>
<svg class="a" style="left:268px;top:996px" width="1612" height="27" viewBox="268 996 1612 27"><rect x="297" y="997" width="2" height="3" fill="#8e8e8e"/><rect x="312" y="997" width="2" height="6" fill="#8e8e8e"/><rect x="327" y="997" width="2" height="3" fill="#8e8e8e"/><rect x="341" y="997" width="2" height="3" fill="#8e8e8e"/><rect x="356" y="997" width="2" height="3" fill="#8e8e8e"/><rect x="371" y="997" width="2" height="3" fill="#8e8e8e"/><rect x="385" y="997" width="2" height="4" fill="#8e8e8e"/><rect x="400" y="997" width="2" height="3" fill="#8e8e8e"/><rect x="415" y="997" width="2" height="3" fill="#8e8e8e"/><rect x="429" y="997" width="2" height="3" fill="#8e8e8e"/><rect x="444" y="997" width="2" height="3" fill="#8e8e8e"/><rect x="459" y="997" width="2" height="6" fill="#8e8e8e"/><rect x="473" y="997" width="2" height="3" fill="#8e8e8e"/><rect x="488" y="997" width="2" height="3" fill="#8e8e8e"/><rect x="502" y="997" width="2" height="3" fill="#8e8e8e"/><rect x="517" y="997" width="2" height="3" fill="#8e8e8e"/><rect x="532" y="997" width="2" height="4" fill="#8e8e8e"/><rect x="546" y="997" width="2" height="3" fill="#8e8e8e"/><rect x="561" y="997" width="2" height="3" fill="#8e8e8e"/><rect x="576" y="997" width="2" height="3" fill="#8e8e8e"/><rect x="590" y="997" width="2" height="3" fill="#8e8e8e"/><rect x="605" y="997" width="2" height="6" fill="#8e8e8e"/><rect x="620" y="997" width="2" height="3" fill="#8e8e8e"/><rect x="634" y="997" width="2" height="3" fill="#8e8e8e"/><rect x="649" y="997" width="2" height="3" fill="#8e8e8e"/><rect x="664" y="997" width="2" height="3" fill="#8e8e8e"/><rect x="678" y="997" width="2" height="4" fill="#8e8e8e"/><rect x="693" y="997" width="2" height="3" fill="#8e8e8e"/><rect x="708" y="997" width="2" height="3" fill="#8e8e8e"/><rect x="722" y="997" width="2" height="3" fill="#8e8e8e"/><rect x="737" y="997" width="2" height="3" fill="#8e8e8e"/><rect x="751" y="997" width="2" height="6" fill="#8e8e8e"/><rect x="766" y="997" width="2" height="3" fill="#8e8e8e"/><rect x="781" y="997" width="2" height="3" fill="#8e8e8e"/><rect x="795" y="997" width="2" height="3" fill="#8e8e8e"/><rect x="810" y="997" width="2" height="3" fill="#8e8e8e"/><rect x="825" y="997" width="2" height="4" fill="#8e8e8e"/><rect x="839" y="997" width="2" height="3" fill="#8e8e8e"/><rect x="854" y="997" width="2" height="3" fill="#8e8e8e"/><rect x="869" y="997" width="2" height="3" fill="#8e8e8e"/><rect x="883" y="997" width="2" height="3" fill="#8e8e8e"/><rect x="898" y="997" width="2" height="6" fill="#8e8e8e"/><rect x="913" y="997" width="2" height="3" fill="#8e8e8e"/><rect x="927" y="997" width="2" height="3" fill="#8e8e8e"/><rect x="942" y="997" width="2" height="3" fill="#8e8e8e"/><rect x="957" y="997" width="2" height="3" fill="#8e8e8e"/><rect x="971" y="997" width="2" height="4" fill="#8e8e8e"/><rect x="986" y="997" width="2" height="3" fill="#8e8e8e"/><rect x="1001" y="997" width="2" height="3" fill="#8e8e8e"/><rect x="1015" y="997" width="2" height="3" fill="#8e8e8e"/><rect x="1030" y="997" width="2" height="3" fill="#8e8e8e"/><rect x="1045" y="997" width="2" height="6" fill="#8e8e8e"/><rect x="1059" y="997" width="2" height="3" fill="#8e8e8e"/><rect x="1074" y="997" width="2" height="3" fill="#8e8e8e"/><rect x="1088" y="997" width="2" height="3" fill="#8e8e8e"/><rect x="1103" y="997" width="2" height="3" fill="#8e8e8e"/><rect x="1118" y="997" width="2" height="4" fill="#8e8e8e"/><rect x="1132" y="997" width="2" height="3" fill="#8e8e8e"/><rect x="1147" y="997" width="2" height="3" fill="#8e8e8e"/><rect x="1162" y="997" width="2" height="3" fill="#8e8e8e"/><rect x="1176" y="997" width="2" height="3" fill="#8e8e8e"/><rect x="1191" y="997" width="2" height="6" fill="#8e8e8e"/><rect x="1206" y="997" width="2" height="3" fill="#8e8e8e"/><rect x="1220" y="997" width="2" height="3" fill="#8e8e8e"/><rect x="1235" y="997" width="2" height="3" fill="#8e8e8e"/><rect x="1250" y="997" width="2" height="3" fill="#8e8e8e"/><rect x="1264" y="997" width="2" height="4" fill="#8e8e8e"/><rect x="1279" y="997" width="2" height="3" fill="#8e8e8e"/><rect x="1294" y="997" width="2" height="3" fill="#8e8e8e"/><rect x="1308" y="997" width="2" height="3" fill="#8e8e8e"/><rect x="1323" y="997" width="2" height="3" fill="#8e8e8e"/><rect x="1337" y="997" width="2" height="6" fill="#8e8e8e"/><rect x="1352" y="997" width="2" height="3" fill="#8e8e8e"/><rect x="1367" y="997" width="2" height="3" fill="#8e8e8e"/><rect x="1381" y="997" width="2" height="3" fill="#8e8e8e"/><rect x="1396" y="997" width="2" height="3" fill="#8e8e8e"/><rect x="1411" y="997" width="2" height="4" fill="#8e8e8e"/><rect x="1425" y="997" width="2" height="3" fill="#8e8e8e"/><rect x="1440" y="997" width="2" height="3" fill="#8e8e8e"/><rect x="1455" y="997" width="2" height="3" fill="#8e8e8e"/><rect x="1469" y="997" width="2" height="3" fill="#8e8e8e"/><rect x="1484" y="997" width="2" height="6" fill="#8e8e8e"/><rect x="1499" y="997" width="2" height="3" fill="#8e8e8e"/><rect x="1513" y="997" width="2" height="3" fill="#8e8e8e"/><rect x="1528" y="997" width="2" height="3" fill="#8e8e8e"/><rect x="1543" y="997" width="2" height="3" fill="#8e8e8e"/><rect x="1557" y="997" width="2" height="4" fill="#8e8e8e"/><rect x="1572" y="997" width="2" height="3" fill="#8e8e8e"/><rect x="1587" y="997" width="2" height="3" fill="#8e8e8e"/><rect x="1601" y="997" width="2" height="3" fill="#8e8e8e"/><rect x="1616" y="997" width="2" height="3" fill="#8e8e8e"/><rect x="1631" y="997" width="2" height="6" fill="#8e8e8e"/><rect x="1645" y="997" width="2" height="3" fill="#8e8e8e"/><rect x="1660" y="997" width="2" height="3" fill="#8e8e8e"/><rect x="1674" y="997" width="2" height="3" fill="#8e8e8e"/><rect x="1689" y="997" width="2" height="3" fill="#8e8e8e"/><rect x="1704" y="997" width="2" height="4" fill="#8e8e8e"/><rect x="1718" y="997" width="2" height="3" fill="#8e8e8e"/><rect x="1733" y="997" width="2" height="3" fill="#8e8e8e"/><rect x="1748" y="997" width="2" height="3" fill="#8e8e8e"/><path d="M1028.500 997V1023" stroke="#f4ec00" stroke-width="1.300"/></svg>
<div class="t " style="left:295px;top:1007.7px;font-size:12.600px;color:#c8c8c8;">31.500</div>
<div class="t c" style="left:460px;top:1007.7px;font-size:12.600px;color:#c8c8c8;">432.000</div>
<div class="t c" style="left:606px;top:1007.7px;font-size:12.600px;color:#c8c8c8;">432.500</div>
<div class="t c" style="left:752px;top:1007.7px;font-size:12.600px;color:#c8c8c8;">433.000</div>
<div class="t c" style="left:899px;top:1007.7px;font-size:12.600px;color:#c8c8c8;">433.500</div>
<div class="t c" style="left:1046px;top:1007.7px;font-size:12.600px;color:#c8c8c8;">434.000</div>
<div class="t c" style="left:1192px;top:1007.7px;font-size:12.600px;color:#c8c8c8;">434.500</div>
<div class="t c" style="left:1338px;top:1007.7px;font-size:12.600px;color:#c8c8c8;">435.000</div>
<div class="t c" style="left:1485px;top:1007.7px;font-size:12.600px;color:#c8c8c8;">435.500</div>
<div class="t c" style="left:1632px;top:1007.7px;font-size:12.600px;color:#c8c8c8;">436.000</div>
<div class="a" style="left:268px;top:996px;width:27px;height:27px;background:#f0f0f0;"></div>
<div class="sb" style="left:270px;top:998px;width:25px;height:24px;"></div>
<svg class="a" style="left:274px;top:1002px;" width="17" height="17" viewBox="0 0 17 17"><circle cx="8.500" cy="8.500" r="7.300" fill="#fafafa" stroke="#555" stroke-width="1.500"/><path d="M8.500 5v7l-4-3.500zM12.500 5v7l-4-3.500z" fill="#222"/></svg>
<div class="a" style="left:1762px;top:996px;width:118px;height:27px;background:#f0f0f0;"></div>
<div class="sb" style="left:1763px;top:998px;width:37px;height:24px;"></div>
<svg class="a" style="left:1773px;top:1002px;" width="18" height="15" viewBox="0 0 18 15"><path d="M7 5.500l3.500-2 2.500-3" stroke="#555" fill="none" stroke-width="1"/><rect x=".6" y="5.100" width="16.300" height="8.800" rx="1" fill="#f6f6f6" stroke="#333" stroke-width="1"/><path d="M2.500 7.500h12.500M2.500 9.500h12.500" stroke="#333" stroke-width="1" stroke-dasharray="1.500 1"/><path d="M4.500 11.500h8.500" stroke="#333" stroke-width="1.200"/></svg>
<div class="sb" style="left:1802px;top:998px;width:50px;height:24px;"></div>
<div class="t rb" style="left:1811px;top:1004px;color:#15152a;">x5</div>
<svg class="a" style="left:1839px;top:1005px;" width="6" height="9" viewBox="0 0 6 9"><path d="M0 0l5 4.500-5 4.500z" fill="#111"/></svg>
<div class="sb" style="left:1854px;top:998px;width:24px;height:24px;"></div>
<svg class="a" style="left:1857.5px;top:1001.5px;" width="17" height="17" viewBox="0 0 17 17"><circle cx="8.500" cy="8.500" r="7.300" fill="#fafafa" stroke="#555" stroke-width="1.500"/><path d="M4.500 5v7l4-3.500zM8.500 5v7l4-3.500z" fill="#222"/></svg>
<div class="a" style="left:1881px;top:146px;width:39px;height:877px;background:#000;"></div>
<div class="a" style="left:1919px;top:146px;width:1px;height:877px;background:#d8d8d8;"></div>
<div class="a" style="left:1882px;top:147px;width:36px;height:28px;background:linear-gradient(#4c4c4c 0,#2e2e2e 38%,#000 40%,#000 100%);border:1px solid #3e3e3e;"></div>
<div class="t c" style="left:1900px;top:155px;font-size:12px;color:#f4f4f4;">Auto</div>
<div class="a" style="left:1883px;top:323px;width:34px;height:360px;background:linear-gradient(#ffff00 0,#ffff40 12px,#ffffb0 24px,#ffffff 36px,#ffffff 100px,#dfe4ff 135px,#aebcff 175px,#7e96f6 205px,#5a76e6 225px,#3f56c0 255px,#2a3a96 280px,#18205e 315px,#0a0e3a 340px,#02031e 360px);border-bottom:1px solid #f4f4f4;"></div>
<div class="t c" style="left:1900px;top:224px;font-size:8.500px;color:#b4b4b4;">-10</div>
<div class="t c" style="left:1900px;top:277px;font-size:8.500px;color:#b4b4b4;">-20</div>
<div class="a" style="left:1886px;top:325px;width:28px;height:18px;background:rgba(96,90,30,.82);border-radius:4px;"></div>
<div class="t c" style="left:1900px;top:330px;font-size:8.500px;color:#b4b4b4;">-30</div>
<div class="a" style="left:1886px;top:378px;width:28px;height:18px;background:rgba(110,110,110,.85);border-radius:4px;"></div>
<div class="t c" style="left:1900px;top:383px;font-size:8.500px;color:#b4b4b4;">-40</div>
<div class="a" style="left:1886px;top:431px;width:28px;height:18px;background:rgba(112,112,118,.85);border-radius:4px;"></div>
<div class="t c" style="left:1900px;top:436px;font-size:8.500px;color:#b4b4b4;">-50</div>
<div class="a" style="left:1886px;top:484px;width:28px;height:18px;background:rgba(96,104,140,.8);border-radius:4px;"></div>
<div class="t c" style="left:1900px;top:489px;font-size:8.500px;color:#b4b4b4;">-60</div>
<div class="a" style="left:1886px;top:537px;width:28px;height:18px;background:rgba(52,66,140,.8);border-radius:4px;"></div>
<div class="t c" style="left:1900px;top:542px;font-size:8.500px;color:#b4b4b4;">-70</div>
<div class="a" style="left:1886px;top:590px;width:28px;height:18px;background:rgba(30,40,100,.8);border-radius:4px;"></div>
<div class="t c" style="left:1900px;top:595px;font-size:8.500px;color:#b4b4b4;">-80</div>
<div class="a" style="left:1886px;top:643px;width:28px;height:18px;background:rgba(14,20,62,.85);border-radius:4px;"></div>
<div class="t c" style="left:1900px;top:648px;font-size:8.500px;color:#b4b4b4;">-90</div>
<div class="t c" style="left:1900px;top:701px;font-size:8.500px;color:#b4b4b4;">-100</div>
<div class="t c" style="left:1900px;top:754px;font-size:8.500px;color:#b4b4b4;">-110</div>
<div class="t c" style="left:1900px;top:807px;font-size:8.500px;color:#b4b4b4;">-120</div>
<div class="t c" style="left:1900px;top:860px;font-size:8.500px;color:#b4b4b4;">-130</div>
<div class="t c" style="left:1900px;top:913px;font-size:8.500px;color:#b4b4b4;">-140</div>
<div class="t c" style="left:1900px;top:966px;font-size:8.500px;color:#b4b4b4;">-150</div>
<div class="a" style="left:0px;top:1024px;width:268px;height:24px;background:#f0f0f0;"></div>
<div class="a" style="left:268px;top:1023px;width:1652px;height:25px;background:#f0f0f0;"></div>
<div class="t " style="left:9px;top:1031px;font-size:11px;letter-spacing:-.150px;color:#6d6d6d;">SDRPlay RSP1, BW = 1.000 MHz</div>
<div class="t " style="left:1442px;top:1031px;font-size:11px;color:#000;">CPU: 2.9%</div>
<div class="a" style="left:1507px;top:1031px;width:70px;height:12px;background:#e6e6e6;border:1px solid #bcbcbc;"></div>
<div class="t " style="left:1591px;top:1031px;font-size:11px;color:#000;">Audio: 107ms</div>
<div class="a" style="left:1674px;top:1031px;width:70px;height:12px;background:#e6e6e6;border:1px solid #bcbcbc;"></div>
<div class="a" style="left:1676px;top:1033px;width:66px;height:8px;background:#06b025;"></div>
<div class="t " style="left:1758px;top:1031px;font-size:11px;color:#000;">Size: 507.6 MB</div>
<div class="a" style="left:1845px;top:1031px;width:70px;height:12px;background:#e6e6e6;border:1px solid #bcbcbc;"></div>
<div class="a" style="left:1846px;top:1033px;width:2px;height:8px;background:#06b025;"></div>
</body></html>
